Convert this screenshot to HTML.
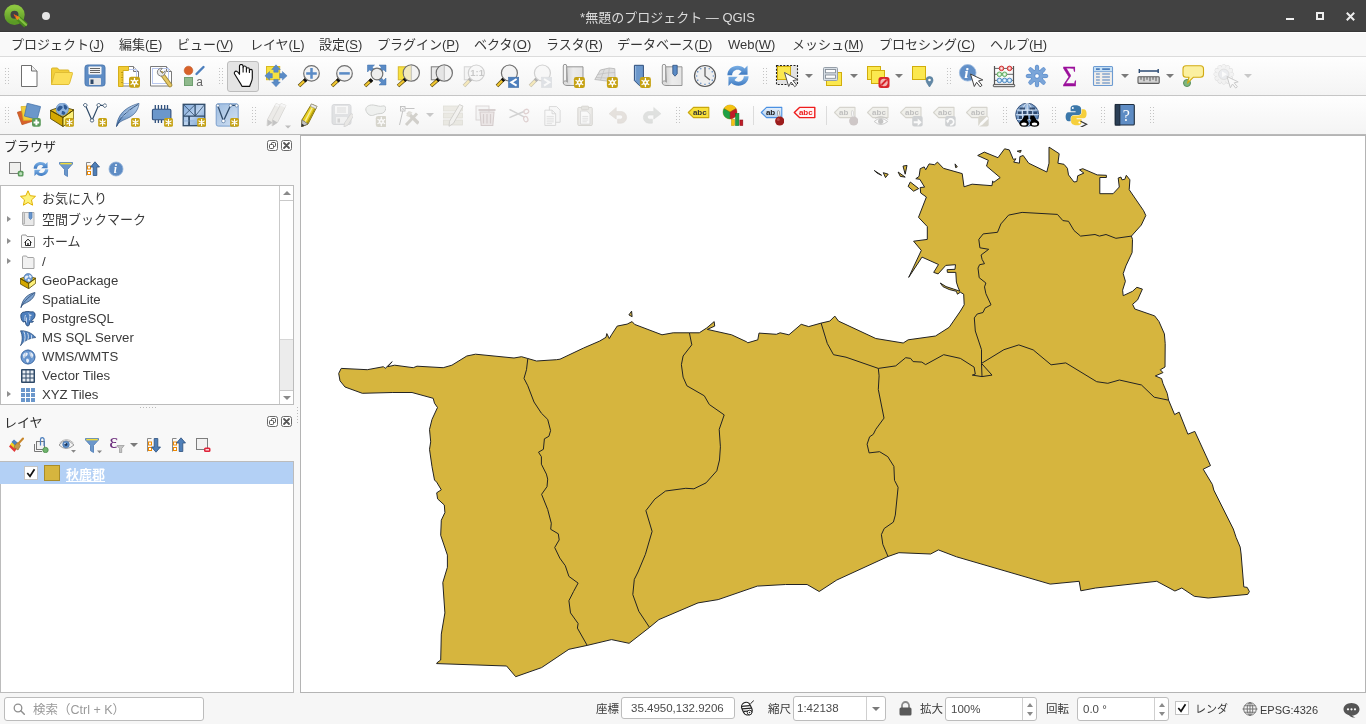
<!DOCTYPE html>
<html lang="ja"><head><meta charset="utf-8"><title>QGIS</title>
<style>
*{box-sizing:border-box;margin:0;padding:0}
html,body{width:1366px;height:724px;overflow:hidden}
body{position:relative;background:#f6f6f6;font-family:"Liberation Sans","Noto Sans CJK JP",sans-serif;font-size:13px;color:#2e2e2e}
.abs{position:absolute}
body>div{will-change:transform}
#title{left:0;top:0;width:1366px;height:32px;background:#424242;border-bottom:1px solid #383838;color:#dcdcdc}
#title .t{position:absolute;left:0;width:1366px;top:8.5px;text-align:center;font-size:13px;line-height:18px;padding-right:31px}
#menu{left:0;top:32px;width:1366px;height:24px;background:#f9f9f9;border-top:1px solid #fff}
#menu span{position:absolute;top:2px;font-size:13px;line-height:20px;white-space:nowrap;color:#363636}
#menu u{text-decoration:underline;text-underline-offset:2px;text-decoration-thickness:1px}
#tb1{left:0;top:56px;width:1366px;height:40px;background:linear-gradient(#fefefe,#f4f4f4);border-top:1px solid #dcdcdc;border-bottom:1px solid #c6c6c6}
#tb2{left:0;top:96px;width:1366px;height:39px;background:linear-gradient(#fefefe,#f4f4f4);border-bottom:1px solid #b9b9b9}
.ic{position:absolute;width:24px;height:24px}
.ic svg{display:block}
.hd{position:absolute;width:5px;height:18px;background-image:radial-gradient(circle,#c4c4c4 0.7px,transparent 0.9px);background-size:3px 3px}
.dd{position:absolute;width:0;height:0;border-left:4px solid transparent;border-right:4px solid transparent;border-top:4px solid #7a7a7a}
.dd.dis{border-top-color:#c8c8c8}
.sep{position:absolute;width:1px;height:22px;background:#dcdcdc}
#left{left:0;top:136px;width:300px;height:556px;background:#f8f8f8}
#canvas{left:300px;top:135px;width:1066px;height:558px;background:#fff;border:1px solid #b4b4b4;overflow:hidden}
.mapsvg{position:absolute;left:0;top:0}
.ptitle{position:absolute;left:4px;font-size:13px;line-height:18px;color:#2e2e2e}
.tree{position:absolute;left:0;width:294px;background:#fff;border:1px solid #bcbcbc}
.row{position:absolute;left:42px;font-size:13.2px;line-height:18px;white-space:nowrap;color:#3a3a3a}
.exp{position:absolute;left:7px;width:0;height:0;border-top:3.5px solid transparent;border-bottom:3.5px solid transparent;border-left:4.5px solid #909090;margin-top:.5px}
.pbtn{position:absolute;width:11px;height:11px}
#status{left:0;top:693px;width:1366px;height:31px;background:#f6f6f6}
#status .lb{position:absolute;top:7px;font-size:11.5px;line-height:18px;white-space:nowrap;color:#3a3a3a}
.fld{position:absolute;top:5px;height:22px;background:#fff;border:1px solid #bdbdbd;border-radius:3px;font-size:11.5px;line-height:20px;color:#4a4a4a;white-space:nowrap;padding-left:5px}
.si{position:absolute}
</style></head><body>
<div id="title" class="abs">
 <div class="abs" style="left:4px;top:4px"><svg width="24" height="24" viewBox="0 0 24 24"><defs><linearGradient id="qg" x1="0" y1="0" x2="0" y2="1"><stop offset="0" stop-color="#8cc63f"/><stop offset="1" stop-color="#5b9a25"/></linearGradient></defs><circle cx="10.500" cy="10.700" r="7.100" fill="none" stroke="url(#qg)" stroke-width="6.200"/><path d="M14 14.200L22 21.500" stroke="#4a8a1c" stroke-width="5.200"/><path d="M14.500 14L22.800 21.500" stroke="#86c243" stroke-width="2"/><path d="M9.600 10.300l6.400 3-2.800 3z" fill="#f08a1c"/><path d="M9.600 10.300l3.300 1.500-1.500 1.600z" fill="#e8541c"/></svg></div>
 <div class="abs" style="left:42px;top:12px;width:8px;height:8px;border-radius:4px;background:#e6e6e6"></div>
 <div class="t">*無題のプロジェクト — QGIS</div>
 <div class="abs" style="left:1286px;top:18px;width:8px;height:2px;background:#f0f0f0"></div>
 <div class="abs" style="left:1316px;top:12px;width:8px;height:8px;border:2px solid #ededed"></div>
 <svg class="abs" style="left:1345.500px;top:11.500px" width="9" height="9" viewBox="0 0 9 9"><path d="M.8 .8L8.200 8.200M8.200 .8L.8 8.200" stroke="#ededed" stroke-width="2"/></svg>
</div>
<div id="menu" class="abs">
 <span style="left:11px">プロジェクト(<u>J</u>)</span>
 <span style="left:119px">編集(<u>E</u>)</span>
 <span style="left:177px">ビュー(<u>V</u>)</span>
 <span style="left:250px">レイヤ(<u>L</u>)</span>
 <span style="left:319px">設定(<u>S</u>)</span>
 <span style="left:377px">プラグイン(<u>P</u>)</span>
 <span style="left:474px">ベクタ(<u>O</u>)</span>
 <span style="left:546px">ラスタ(<u>R</u>)</span>
 <span style="left:617px">データベース(<u>D</u>)</span>
 <span style="left:728px">Web(<u>W</u>)</span>
 <span style="left:792px">メッシュ(<u>M</u>)</span>
 <span style="left:879px">プロセシング(<u>C</u>)</span>
 <span style="left:990px">ヘルプ(<u>H</u>)</span>
</div>
<div id="tb1" class="abs">
<div class="hd" style="left:4px;top:10px"></div>
<div class="ic" style="left:17px;top:7px"><svg width="24" height="24" viewBox="0 0 24 24"><path d="M4.5 1.5h10l5.5 5.5v15.500h-15.500z" fill="#fff" stroke="#6f6f6f" stroke-width="1"/><path d="M14.500 1.500v5.500h5.500" fill="#f0f0f0" stroke="#6f6f6f" stroke-width="1"/></svg></div>
<div class="ic" style="left:50px;top:7px"><svg width="24" height="24" viewBox="0 0 24 24"><path d="M1.500 20.500v-15.500q0-1 1-1h5l1.500 2h9q1 0 1 1v2.500" fill="#f3cf3a" stroke="#d9b52a" stroke-width="1"/><path d="M1.500 20.500l3-11q.3-1 1.300-1h16q1 0 .7 1l-3 10q-.3 1-1.300 1z" fill="#fbde58" stroke="#e0bd35" stroke-width="1"/></svg></div>
<div class="ic" style="left:83px;top:7px"><svg width="24" height="24" viewBox="0 0 24 24"><rect x="2" y="1" width="20" height="21" rx="2.500" fill="#5e8cc4" stroke="#4c79b0"/><rect x="5.500" y="2.500" width="13" height="8" rx=".8" fill="#f4f4f4"/><path d="M7 4.500h10M7 6.500h10M7 8.500h10" stroke="#555" stroke-width=".9"/><rect x="6" y="14" width="12" height="7" rx=".8" fill="#e4e4e4"/><rect x="7.500" y="15.500" width="3" height="4.500" fill="#2f4868"/></svg></div>
<div class="ic" style="left:116px;top:7px"><svg width="24" height="24" viewBox="0 0 24 24"><path d="M3.500 2.500h14l5 5v14.500h-19z" fill="#fff" stroke="#7a7a7a"/><path d="M17.500 2.500v5h5" fill="#eee" stroke="#7a7a7a"/><rect x="6.500" y="5.500" width="14" height="14" fill="none" stroke="#b9c8ef" stroke-width="1"/><path d="M2.500 2.500h10v4h-5.500v16h-4.500z" fill="#f1cb35" stroke="#d4ae1c" stroke-width="1"/><path d="M5 8.500h2M5.500 11h1.500M5 13.500h2M5.500 16h1.500M5 18.500h2" stroke="#b08d10" stroke-width=".8"/><g opacity="1"><rect x="13" y="12.8" width="11" height="11" rx="2.2" fill="#c6a213"/><g stroke="#fff" stroke-width="1.3" stroke-linecap="round"><path d="M18.5 14.3v8.0M15.1 16.3l6.8 4.0M21.9 16.3l-6.8 4.0"/></g><circle cx="18.5" cy="18.3" r="2.5" fill="#fff"/><circle cx="18.5" cy="18.3" r="1.0" fill="#c6a213"/></g></svg></div>
<div class="ic" style="left:149px;top:7px"><svg width="24" height="24" viewBox="0 0 24 24"><path d="M1.500 2.500h16l5 5v14.500h-21z" fill="#fff" stroke="#7a7a7a"/><path d="M17.500 2.500v5h5" fill="#eee" stroke="#7a7a7a"/><rect x="3.500" y="4.500" width="16" height="15" fill="none" stroke="#b9c8ef" stroke-width="1"/><path d="M12.500 9.500L21 21" stroke="#a08835" stroke-width="4.600" stroke-linecap="round"/><path d="M12.500 9.500L21 21" stroke="#e5c765" stroke-width="2.800" stroke-linecap="round"/><path d="M8.300 8.200a4 4 0 0 1 5-3.800l-2.300 2.600 2.600 2.400 2.400-2.600a4 4 0 0 1-4.700 5.200 4 4 0 0 1-3-3.800z" fill="#eaeaea" stroke="#777" stroke-width=".9"/></svg></div>
<div class="ic" style="left:182px;top:7px"><svg width="24" height="24" viewBox="0 0 24 24"><g transform="translate(0,1)"><circle cx="6.500" cy="5.500" r="4.300" fill="#d8622a" stroke="#c25a26" stroke-width=".6"/><path d="M14.500 9L21.500 2" stroke="#4d7fbd" stroke-width="2.400" stroke-linecap="round"/><rect x="2.500" y="12.500" width="8" height="8" fill="#8fb98c" stroke="#6f9f70" stroke-width="1"/><text x="14.200" y="21" font-family="Liberation Sans,sans-serif" font-size="12" fill="#666">a</text></g></svg></div>
<div class="hd" style="left:218px;top:10px"></div>
<div style="position:absolute;left:227px;top:4px;width:32px;height:31px;background:#e4e4e4;border:1px solid #bdbdbd;border-radius:3px"></div>
<div class="ic" style="left:231px;top:7px"><svg width="24" height="24" viewBox="0 0 24 24"><path d="M11 22.400C10 20 8 17.500 6.200 14.300L3.600 10C2.800 8.500 4 7 5.500 7.200 6.800 7.500 7.600 8.800 8.500 10.300V2.300C8.500-.2 12-.2 12.100 2.500V3.600C12.300 1.300 15.300 1.500 15.400 3.800V5C15.600 3.200 18.300 3.400 18.400 5.200V6.600C18.700 4.800 21.300 5 21.300 6.900V14C21.300 17 19.500 19 18.700 22.400Z" fill="#fff" stroke="#111" stroke-width="1.150" stroke-linejoin="round"/><path d="M12.100 3.600V8.500M15.400 5V8.500M18.400 6.600V9" stroke="#111" stroke-width="1.100"/></svg></div>
<div class="ic" style="left:264px;top:7px"><svg width="24" height="24" viewBox="0 0 24 24"><rect x="2.500" y="2.500" width="13.200" height="13.200" fill="#f7e23f" stroke="#d9b820"/><g fill="#5a8bc6" stroke="#4a7ab5" stroke-width=".5" stroke-linejoin="round"><path d="M12 .8l4.300 4.700h-2.100v2.700h-4.400v-2.700h-2.100z"/><path d="M12 22.800l4.300-4.700h-2.100v-2.700h-4.400v2.700h-2.100z"/><path d="M.9 11.800l4.700-4.300v2.100h2.700v4.400h-2.700v2.100z"/><path d="M23.100 11.800l-4.700-4.300v2.100h-2.700v4.400h2.700v2.100z"/></g></svg></div>
<div class="ic" style="left:297px;top:7px"><svg width="24" height="24" viewBox="0 0 24 24"><g opacity="1"><path d="M9.2 15.2L2 22" stroke="#5a4a10" stroke-width="3.600" stroke-linecap="butt"/><path d="M7.999999999999999 16.4L2.300 21.700" stroke="#f2c832" stroke-width="2.200" stroke-linecap="butt"/><path d="M9.5 14.899999999999999l-2.300 2.300" stroke="#111" stroke-width="3.600"/><circle cx="14.5" cy="9.4" r="7.8" fill="#f3f3f3" stroke="#707070" stroke-width="1.200"/></g><path d="M9.200 9.400h10.600M14.500 4.100v10.600" stroke="#5a8bc6" stroke-width="2.500"/></svg></div>
<div class="ic" style="left:330px;top:7px"><svg width="24" height="24" viewBox="0 0 24 24"><g opacity="1"><path d="M9.2 15.2L2 22" stroke="#5a4a10" stroke-width="3.600" stroke-linecap="butt"/><path d="M7.999999999999999 16.4L2.300 21.700" stroke="#f2c832" stroke-width="2.200" stroke-linecap="butt"/><path d="M9.5 14.899999999999999l-2.300 2.300" stroke="#111" stroke-width="3.600"/><circle cx="14.5" cy="9.4" r="7.8" fill="#f3f3f3" stroke="#707070" stroke-width="1.200"/></g><path d="M9.200 9.400h10.600" stroke="#5a8bc6" stroke-width="2.500"/></svg></div>
<div class="ic" style="left:363px;top:7px"><svg width="24" height="24" viewBox="0 0 24 24"><g fill="#5a8bc6" stroke="#4071ab" stroke-width=".5"><path d="M4.500 1h7l-2.300 2.300 3 3-2.400 2.400-3-3-2.300 2.300z"/><path d="M23 1v7l-2.300-2.300-3 3-2.400-2.400 3-3-2.300-2.300z"/><path d="M23 21h-7l2.300-2.300-3-3 2.400-2.400 3 3 2.300-2.300z"/></g><g opacity="1"><path d="M8.7 15.8L2 22" stroke="#5a4a10" stroke-width="3.600" stroke-linecap="butt"/><path d="M7.499999999999999 17.0L2.300 21.700" stroke="#f2c832" stroke-width="2.200" stroke-linecap="butt"/><path d="M9.0 15.5l-2.300 2.300" stroke="#111" stroke-width="3.600"/><circle cx="14" cy="10" r="5.8" fill="#ededed" stroke="#707070" stroke-width="1.200"/></g></svg></div>
<div class="ic" style="left:396px;top:7px"><svg width="24" height="24" viewBox="0 0 24 24"><rect x="2.300" y="2.800" width="11" height="13" fill="#f7e23f" stroke="#d8b82a"/><g opacity="1"><path d="M10.0 14.8L2 22" stroke="#5a4a10" stroke-width="3.600" stroke-linecap="butt"/><path d="M8.8 16.0L2.300 21.700" stroke="#f2c832" stroke-width="2.200" stroke-linecap="butt"/><path d="M10.3 14.5l-2.300 2.300" stroke="#111" stroke-width="3.600"/><circle cx="15.3" cy="9" r="8.1" fill="#f3f3f3" stroke="#707070" stroke-width="1.200"/></g><path d="M15.300 1.500a7.500 7.500 0 0 0 0 15z" fill="#f0e6b4" opacity=".85"/><path d="M15.300 1.300v15.400" stroke="#aaa" stroke-width=".7"/></svg></div>
<div class="ic" style="left:429px;top:7px"><svg width="24" height="24" viewBox="0 0 24 24"><rect x="2.300" y="2.800" width="11" height="13" fill="#e9e9e9" stroke="#7d7d7d"/><g opacity="1"><path d="M10.0 14.8L2 22" stroke="#5a4a10" stroke-width="3.600" stroke-linecap="butt"/><path d="M8.8 16.0L2.300 21.700" stroke="#f2c832" stroke-width="2.200" stroke-linecap="butt"/><path d="M10.3 14.5l-2.300 2.300" stroke="#111" stroke-width="3.600"/><circle cx="15.3" cy="9" r="8.1" fill="#f3f3f3" stroke="#707070" stroke-width="1.200"/></g><path d="M15.300 1.500a7.500 7.500 0 0 0 0 15z" fill="#e2e2e2" opacity=".85"/><path d="M15.300 1.300v15.400" stroke="#aaa" stroke-width=".7"/></svg></div>
<div class="ic" style="left:462px;top:7px"><svg width="24" height="24" viewBox="0 0 24 24"><g opacity=".3"><rect x="2.300" y="2.800" width="11" height="13" fill="#e9e9e9" stroke="#7d7d7d"/><g opacity="1"><path d="M9.0 14.8L2 22" stroke="#5a4a10" stroke-width="3.600" stroke-linecap="butt"/><path d="M7.8 16.0L2.300 21.700" stroke="#f2c832" stroke-width="2.200" stroke-linecap="butt"/><path d="M9.3 14.5l-2.300 2.300" stroke="#111" stroke-width="3.600"/><circle cx="14.3" cy="9" r="8" fill="#f3f3f3" stroke="#707070" stroke-width="1.200"/></g><text x="8.300" y="12.300" font-family="Liberation Sans,sans-serif" font-weight="bold" font-size="9.500" fill="#555">1:1</text></g></svg></div>
<div class="ic" style="left:495px;top:7px"><svg width="24" height="24" viewBox="0 0 24 24"><g opacity="1"><path d="M9.100000000000001 14.8L2 22" stroke="#5a4a10" stroke-width="3.600" stroke-linecap="butt"/><path d="M7.900000000000001 16.0L2.300 21.700" stroke="#f2c832" stroke-width="2.200" stroke-linecap="butt"/><path d="M9.400000000000002 14.5l-2.300 2.300" stroke="#111" stroke-width="3.600"/><circle cx="14.4" cy="9" r="8" fill="#f3f3f3" stroke="#707070" stroke-width="1.200"/></g><rect x="13.600" y="13.200" width="10.200" height="10.200" fill="#4d7fbd" stroke="#3c6aa3" stroke-width=".6"/><path d="M21.600 15l-5.300 3.300 5.300 3.300" fill="none" stroke="#fff" stroke-width="2"/></svg></div>
<div class="ic" style="left:528px;top:7px"><svg width="24" height="24" viewBox="0 0 24 24"><g opacity=".3"><g opacity="1"><path d="M9.100000000000001 14.8L2 22" stroke="#5a4a10" stroke-width="3.600" stroke-linecap="butt"/><path d="M7.900000000000001 16.0L2.300 21.700" stroke="#f2c832" stroke-width="2.200" stroke-linecap="butt"/><path d="M9.400000000000002 14.5l-2.300 2.300" stroke="#111" stroke-width="3.600"/><circle cx="14.4" cy="9" r="8" fill="#f3f3f3" stroke="#707070" stroke-width="1.200"/></g><rect x="13.600" y="13.200" width="10.200" height="10.200" fill="#a9b2bd" stroke="#98a0aa" stroke-width=".6"/><path d="M16 15l5.300 3.300-5.300 3.300" fill="none" stroke="#fff" stroke-width="2"/></g></svg></div>
<div class="ic" style="left:561px;top:7px"><svg width="24" height="24" viewBox="0 0 24 24"><defs><linearGradient id="sg" x1="0" y1="0" x2="1" y2="0"><stop offset="0" stop-color="#d4d4d4"/><stop offset=".4" stop-color="#ececec"/><stop offset="1" stop-color="#e4e4e4"/></linearGradient></defs><path d="M5.500 2.800h16.500v18.700h-15.500z" fill="url(#sg)" stroke="#8c8c8c" stroke-width=".9"/><path d="M2.300 18.800v-16.800a1.600 1.600 0 0 1 3.400 0v17" fill="#f2f2f2" stroke="#8c8c8c" stroke-width=".9"/><path d="M5.700 17.500a2 2 0 0 0-3.400 1.300c0 1.700 1.700 2.700 3.700 2.700h3" fill="#dcdcdc" stroke="#8c8c8c" stroke-width=".9"/><g opacity="1"><rect x="12.9" y="13" width="11" height="11" rx="2.2" fill="#c6a213"/><g stroke="#fff" stroke-width="1.3" stroke-linecap="round"><path d="M18.4 14.5v8.0M14.999999999999998 16.5l6.8 4.0M21.799999999999997 16.5l-6.8 4.0"/></g><circle cx="18.4" cy="18.5" r="2.5" fill="#fff"/><circle cx="18.4" cy="18.5" r="1.0" fill="#c6a213"/></g></svg></div>
<div class="ic" style="left:593.5px;top:7px"><svg width="24" height="24" viewBox="0 0 24 24"><path d="M.8 15.500l5.500-9.500 9-2 5.500.7.500 13.500-7-1z" fill="#dedede" stroke="#b5b5b5" stroke-width=".8" stroke-linejoin="round"/><path d="M3.500 10.500l9-1.500 8.500-.5M10.500 5l-4 11M15.300 4l-1.500 13M2 13.500l10 .5 9.300-.5" stroke="#bdbdbd" stroke-width=".7" fill="none"/><g opacity="1"><rect x="12.9" y="13" width="11" height="11" rx="2.2" fill="#c6a213"/><g stroke="#fff" stroke-width="1.3" stroke-linecap="round"><path d="M18.4 14.5v8.0M14.999999999999998 16.5l6.8 4.0M21.799999999999997 16.5l-6.8 4.0"/></g><circle cx="18.4" cy="18.5" r="2.5" fill="#fff"/><circle cx="18.4" cy="18.5" r="1.0" fill="#c6a213"/></g></svg></div>
<div class="ic" style="left:628px;top:7px"><svg width="24" height="24" viewBox="0 0 24 24"><path d="M6.400 1.300h9v20.300h-4l-5-5z" fill="#6b97cb" stroke="#2f4f7c" stroke-width="1" stroke-linejoin="round"/><path d="M7.600 2v14" stroke="#9dbce0" stroke-width=".9"/><g opacity="1"><rect x="11.9" y="13" width="11" height="11" rx="2.2" fill="#c6a213"/><g stroke="#fff" stroke-width="1.3" stroke-linecap="round"><path d="M17.4 14.5v8.0M13.999999999999998 16.5l6.8 4.0M20.799999999999997 16.5l-6.8 4.0"/></g><circle cx="17.4" cy="18.5" r="2.5" fill="#fff"/><circle cx="17.4" cy="18.5" r="1.0" fill="#c6a213"/></g></svg></div>
<div class="ic" style="left:660px;top:7px"><svg width="24" height="24" viewBox="0 0 24 24"><defs><linearGradient id="sg" x1="0" y1="0" x2="1" y2="0"><stop offset="0" stop-color="#d4d4d4"/><stop offset=".4" stop-color="#ececec"/><stop offset="1" stop-color="#e4e4e4"/></linearGradient></defs><path d="M5.500 2.800h16.500v18.700h-15.500z" fill="url(#sg)" stroke="#8c8c8c" stroke-width=".9"/><path d="M2.300 18.800v-16.800a1.600 1.600 0 0 1 3.400 0v17" fill="#f2f2f2" stroke="#8c8c8c" stroke-width=".9"/><path d="M5.700 17.500a2 2 0 0 0-3.400 1.300c0 1.700 1.700 2.700 3.700 2.700h3" fill="#dcdcdc" stroke="#8c8c8c" stroke-width=".9"/><path d="M12.800 1.300h4.400v8.500l-2.200 2.400-2.200-2.400z" fill="#5a8bc6" stroke="#2f4f7c" stroke-width=".8"/></svg></div>
<div class="ic" style="left:693px;top:7px"><svg width="24" height="24" viewBox="0 0 24 24"><circle cx="12" cy="12" r="10.500" fill="#efefef" stroke="#5a5a5a" stroke-width="1.200"/><g stroke="#4d7fbd" stroke-width="1.200"><path d="M12 3v1.300M12 19.700V21M3 12h1.300M19.700 12H21M7.500 4.200l.6 1.100M16.500 4.200l-.6 1.100M4.200 7.500l1.100.6M19.800 7.500l-1.100.6M4.200 16.500l1.100-.6M19.800 16.500l-1.100-.6M7.500 19.800l.6-1.100M16.500 19.800l-.6-1.100"/></g><path d="M12 3.500v8.500l5 4" fill="none" stroke="#666" stroke-width="1.300"/></svg></div>
<div class="ic" style="left:726px;top:7px"><svg width="24" height="24" viewBox="0 0 24 24"><defs><linearGradient id="rg" x1="0" y1="0" x2="0" y2="1"><stop offset="0" stop-color="#7eb2e6"/><stop offset="1" stop-color="#3c78c0"/></linearGradient></defs><g transform="translate(12 11.700) scale(1.060) translate(-12 -12)"><path d="M2 11.500c0-5.500 4.500-9 9.500-9 3 0 5 1 6.700 2.600l2.800-2.800v8.700h-8.700l3-3c-1-1-2.200-1.600-3.800-1.600-2.800 0-5 2.300-5 5.100z" fill="url(#rg)"/><path d="M22 12.500c0 5.500-4.500 9-9.500 9-3 0-5-1-6.700-2.600l-2.800 2.800v-8.700h8.700l-3 3c1 1 2.200 1.600 3.800 1.600 2.800 0 5-2.300 5-5.100z" fill="url(#rg)"/></g></svg></div>
<div class="hd" style="left:762px;top:10px"></div>
<div class="ic" style="left:774.5px;top:7px"><svg width="26" height="26" viewBox="0 0 26 26"><rect x="1.500" y="1.500" width="21" height="19" fill="#e2e2e2" stroke="#222" stroke-width="1.100" stroke-dasharray="2 1.400"/><rect x="2.500" y="2.500" width="13" height="13" fill="#fbe84f" stroke="#d1ad0c"/><path d="M9.500 8.500l4.200 14 2.400-4.500 3.600 4.700 2-1.600-3.700-4.500 4.600-1z" fill="#fff" stroke="#555" stroke-width="1" stroke-linejoin="round"/></svg></div>
<div class="dd" style="left:805px;top:17px"></div>
<div class="ic" style="left:820px;top:7px"><svg width="24" height="24" viewBox="0 0 24 24"><rect x="6.500" y="8.500" width="15" height="13" fill="#fbe84f" stroke="#d1ad0c"/><rect x="3.500" y="3.500" width="14" height="13" rx="1" fill="#d8dfe6" stroke="#959ea8"/><rect x="5.500" y="5.500" width="10" height="3.300" fill="#fff" stroke="#858e98" stroke-width=".9"/><rect x="5.500" y="11" width="10" height="3.300" fill="#fff" stroke="#858e98" stroke-width=".9"/></svg></div>
<div class="dd" style="left:850px;top:17px"></div>
<div class="ic" style="left:866px;top:7px"><svg width="24" height="25" viewBox="0 0 24 25"><rect x="1.500" y="2.500" width="13" height="13" fill="#fbe84f" stroke="#d1ad0c"/><rect x="5.500" y="6.500" width="13" height="13" fill="#fbe84f" stroke="#d1ad0c"/><rect x="12.500" y="13" width="11" height="11" rx="2.500" fill="#d8242b"/><circle cx="18" cy="18.500" r="3.700" fill="#f3b7b5"/><path d="M15.500 21l5-5" stroke="#d8242b" stroke-width="1.800"/></svg></div>
<div class="dd" style="left:895px;top:17px"></div>
<div class="ic" style="left:910px;top:7px"><svg width="24" height="24" viewBox="0 0 24 24"><rect x="2.500" y="2.500" width="13" height="13" fill="#fbe84f" stroke="#d1ad0c"/><path d="M19.500 23c-2.300-3.500-3.500-5-3.500-7a3.500 3.500 0 0 1 7 0c0 2-1.200 3.500-3.500 7z" fill="#6288a6" stroke="#4f7795" stroke-width=".6"/><circle cx="19.500" cy="16" r="1.300" fill="#fff"/></svg></div>
<div class="hd" style="left:946px;top:10px"></div>
<div class="ic" style="left:957px;top:6px"><svg width="26" height="26" viewBox="0 0 26 26"><circle cx="10.700" cy="9.800" r="8.300" fill="#6290c8" stroke="#9dbbe0" stroke-width=".8"/><text x="7.200" y="15.300" font-family="Liberation Serif,serif" font-style="italic" font-weight="bold" font-size="15.500" fill="#fff">i</text><path d="M13.500 11l3.800 12.500 2.300-4.200 3.500 4.500 1.900-1.500-3.500-4.400 4.300-1z" fill="#fff" stroke="#444" stroke-width="1" stroke-linejoin="round"/></svg></div>
<div class="ic" style="left:992px;top:7px"><svg width="24" height="24" viewBox="0 0 24 24"><path d="M2.500 2v18.500M21.500 2v18.500" stroke="#555" stroke-width="1.200"/><path d="M2.500 4.400h19M2.500 10.300h19M2.500 16.400h19" stroke="#555" stroke-width=".9"/><rect x="1.300" y="20.400" width="21.400" height="2.300" rx=".6" fill="#e2e2e2" stroke="#555" stroke-width="1"/><circle cx="9.5" cy="4.4" r="2.300" fill="#f29a9a" stroke="#cc2a2a" stroke-width=".9"/><rect x="8.7" y="3.6000000000000005" width="1.600" height="1.600" fill="#fff" opacity=".85" transform="rotate(45 9.5 4.4)"/><circle cx="17.5" cy="4.4" r="2.300" fill="#f29a9a" stroke="#cc2a2a" stroke-width=".9"/><rect x="16.7" y="3.6000000000000005" width="1.600" height="1.600" fill="#fff" opacity=".85" transform="rotate(45 17.5 4.4)"/><circle cx="7.4" cy="10.3" r="2.300" fill="#bfe8bf" stroke="#5aa85a" stroke-width=".9"/><rect x="6.6000000000000005" y="9.5" width="1.600" height="1.600" fill="#fff" opacity=".85" transform="rotate(45 7.4 10.3)"/><circle cx="12.6" cy="10.3" r="2.300" fill="#bfe8bf" stroke="#5aa85a" stroke-width=".9"/><rect x="11.799999999999999" y="9.5" width="1.600" height="1.600" fill="#fff" opacity=".85" transform="rotate(45 12.6 10.3)"/><circle cx="7.4" cy="16.4" r="2.300" fill="#b3d6f2" stroke="#4a86c0" stroke-width=".9"/><rect x="6.6000000000000005" y="15.599999999999998" width="1.600" height="1.600" fill="#fff" opacity=".85" transform="rotate(45 7.4 16.4)"/><circle cx="12.6" cy="16.4" r="2.300" fill="#b3d6f2" stroke="#4a86c0" stroke-width=".9"/><rect x="11.799999999999999" y="15.599999999999998" width="1.600" height="1.600" fill="#fff" opacity=".85" transform="rotate(45 12.6 16.4)"/><circle cx="17.5" cy="16.4" r="2.300" fill="#b3d6f2" stroke="#4a86c0" stroke-width=".9"/><rect x="16.7" y="15.599999999999998" width="1.600" height="1.600" fill="#fff" opacity=".85" transform="rotate(45 17.5 16.4)"/></svg></div>
<div class="ic" style="left:1025px;top:7px"><svg width="24" height="24" viewBox="0 0 24 24"><g fill="#7ba5d8" stroke="#4a80c8" stroke-width="1"><rect x="10.4" y="1.1999999999999993" width="3.2" height="6.800000000000001" rx="1.6" transform="rotate(0.0 12 12)"/><rect x="10.4" y="1.1999999999999993" width="3.2" height="6.800000000000001" rx="1.6" transform="rotate(45.0 12 12)"/><rect x="10.4" y="1.1999999999999993" width="3.2" height="6.800000000000001" rx="1.6" transform="rotate(90.0 12 12)"/><rect x="10.4" y="1.1999999999999993" width="3.2" height="6.800000000000001" rx="1.6" transform="rotate(135.0 12 12)"/><rect x="10.4" y="1.1999999999999993" width="3.2" height="6.800000000000001" rx="1.6" transform="rotate(180.0 12 12)"/><rect x="10.4" y="1.1999999999999993" width="3.2" height="6.800000000000001" rx="1.6" transform="rotate(225.0 12 12)"/><rect x="10.4" y="1.1999999999999993" width="3.2" height="6.800000000000001" rx="1.6" transform="rotate(270.0 12 12)"/><rect x="10.4" y="1.1999999999999993" width="3.2" height="6.800000000000001" rx="1.6" transform="rotate(315.0 12 12)"/><circle cx="12" cy="12" r="6"/></g><g fill="#7ba5d8"><rect x="10.4" y="1.1999999999999993" width="3.2" height="6.800000000000001" rx="1.6" transform="rotate(0.0 12 12)"/><rect x="10.4" y="1.1999999999999993" width="3.2" height="6.800000000000001" rx="1.6" transform="rotate(45.0 12 12)"/><rect x="10.4" y="1.1999999999999993" width="3.2" height="6.800000000000001" rx="1.6" transform="rotate(90.0 12 12)"/><rect x="10.4" y="1.1999999999999993" width="3.2" height="6.800000000000001" rx="1.6" transform="rotate(135.0 12 12)"/><rect x="10.4" y="1.1999999999999993" width="3.2" height="6.800000000000001" rx="1.6" transform="rotate(180.0 12 12)"/><rect x="10.4" y="1.1999999999999993" width="3.2" height="6.800000000000001" rx="1.6" transform="rotate(225.0 12 12)"/><rect x="10.4" y="1.1999999999999993" width="3.2" height="6.800000000000001" rx="1.6" transform="rotate(270.0 12 12)"/><rect x="10.4" y="1.1999999999999993" width="3.2" height="6.800000000000001" rx="1.6" transform="rotate(315.0 12 12)"/><circle cx="12" cy="12" r="6"/></g><circle cx="12" cy="12" r="2.3" fill="#fff" stroke="#4a80c8" stroke-width=".8"/></svg></div>
<div class="ic" style="left:1058px;top:7px"><svg width="24" height="24" viewBox="0 0 24 24"><text x="4.300" y="21.500" font-family="Liberation Serif,serif" font-size="29" textLength="15" lengthAdjust="spacingAndGlyphs" fill="#9b0f9b" stroke="#9b0f9b" stroke-width=".3">Σ</text></svg></div>
<div class="ic" style="left:1091px;top:7px"><svg width="24" height="24" viewBox="0 0 24 24"><rect x="2.500" y="2.500" width="19" height="19" rx="1" fill="#f1eeea" stroke="#6c9bd2" stroke-width="1.100"/><rect x="3" y="3" width="18" height="4.500" fill="#c5e0f5"/><path d="M3 7.600h18" stroke="#6c9bd2" stroke-width=".8"/><path d="M5 5.200h3.800M11.200 5.200h7.700" stroke="#4d7fbd" stroke-width="1.700"/><path d="M5 10h3.800M11.200 10h7.700M5 13h3.800M11.200 13h7.700M5 16h3.800M11.200 16h7.700M5 19h3.800M11.200 19h7.700" stroke="#4d7fbd" stroke-width="1.100"/></svg></div>
<div class="dd" style="left:1121px;top:17px"></div>
<div class="ic" style="left:1135.5px;top:7px"><svg width="25" height="24" viewBox="0 0 25 24"><path d="M3 7h19.500M3.300 5v4M22.200 5v4" stroke="#2b4a73" stroke-width="1.400"/><rect x="2" y="12.700" width="21.200" height="6.700" rx=".8" fill="#d2d2d2" stroke="#5a5a5a" stroke-width="1.100"/><path d="M5 13v2.800M8 13v4.200M11 13v2.800M14 13v4.200M17 13v2.800M20 13v4.200" stroke="#5a5a5a" stroke-width="1"/></svg></div>
<div class="dd" style="left:1166px;top:17px"></div>
<div class="ic" style="left:1181px;top:7px"><svg width="25" height="25" viewBox="0 0 25 25"><circle cx="6" cy="19" r="3.500" fill="#7fb77f" stroke="#5a8f5c" stroke-width="1"/><path d="M5 1.700h14.500q3 0 3 3v5.500q0 3-3 3h-7l-6 6 1.500-6h-3q-3 0-3-3v-5.500q0-3 3-3z" fill="#fbf0a0" stroke="#d1aa12" stroke-width="1.100" stroke-linejoin="round"/></svg></div>
<div class="ic" style="left:1213px;top:6px"><svg width="26" height="26" viewBox="0 0 26 26"><g opacity=".3"><g fill="#e4e4e4" stroke="#999" stroke-width="1"><rect x="9.0" y="1.5" width="3.6" height="5.300000000000001" rx="1.8" transform="rotate(0.0 10.8 11.3)"/><rect x="9.0" y="1.5" width="3.6" height="5.300000000000001" rx="1.8" transform="rotate(30.0 10.8 11.3)"/><rect x="9.0" y="1.5" width="3.6" height="5.300000000000001" rx="1.8" transform="rotate(60.0 10.8 11.3)"/><rect x="9.0" y="1.5" width="3.6" height="5.300000000000001" rx="1.8" transform="rotate(90.0 10.8 11.3)"/><rect x="9.0" y="1.5" width="3.6" height="5.300000000000001" rx="1.8" transform="rotate(120.0 10.8 11.3)"/><rect x="9.0" y="1.5" width="3.6" height="5.300000000000001" rx="1.8" transform="rotate(150.0 10.8 11.3)"/><rect x="9.0" y="1.5" width="3.6" height="5.300000000000001" rx="1.8" transform="rotate(180.0 10.8 11.3)"/><rect x="9.0" y="1.5" width="3.6" height="5.300000000000001" rx="1.8" transform="rotate(210.0 10.8 11.3)"/><rect x="9.0" y="1.5" width="3.6" height="5.300000000000001" rx="1.8" transform="rotate(240.0 10.8 11.3)"/><rect x="9.0" y="1.5" width="3.6" height="5.300000000000001" rx="1.8" transform="rotate(270.0 10.8 11.3)"/><rect x="9.0" y="1.5" width="3.6" height="5.300000000000001" rx="1.8" transform="rotate(300.0 10.8 11.3)"/><rect x="9.0" y="1.5" width="3.6" height="5.300000000000001" rx="1.8" transform="rotate(330.0 10.8 11.3)"/><circle cx="10.8" cy="11.3" r="6.5"/></g><g fill="#e4e4e4"><rect x="9.0" y="1.5" width="3.6" height="5.300000000000001" rx="1.8" transform="rotate(0.0 10.8 11.3)"/><rect x="9.0" y="1.5" width="3.6" height="5.300000000000001" rx="1.8" transform="rotate(30.0 10.8 11.3)"/><rect x="9.0" y="1.5" width="3.6" height="5.300000000000001" rx="1.8" transform="rotate(60.0 10.8 11.3)"/><rect x="9.0" y="1.5" width="3.6" height="5.300000000000001" rx="1.8" transform="rotate(90.0 10.8 11.3)"/><rect x="9.0" y="1.5" width="3.6" height="5.300000000000001" rx="1.8" transform="rotate(120.0 10.8 11.3)"/><rect x="9.0" y="1.5" width="3.6" height="5.300000000000001" rx="1.8" transform="rotate(150.0 10.8 11.3)"/><rect x="9.0" y="1.5" width="3.6" height="5.300000000000001" rx="1.8" transform="rotate(180.0 10.8 11.3)"/><rect x="9.0" y="1.5" width="3.6" height="5.300000000000001" rx="1.8" transform="rotate(210.0 10.8 11.3)"/><rect x="9.0" y="1.5" width="3.6" height="5.300000000000001" rx="1.8" transform="rotate(240.0 10.8 11.3)"/><rect x="9.0" y="1.5" width="3.6" height="5.300000000000001" rx="1.8" transform="rotate(270.0 10.8 11.3)"/><rect x="9.0" y="1.5" width="3.6" height="5.300000000000001" rx="1.8" transform="rotate(300.0 10.8 11.3)"/><rect x="9.0" y="1.5" width="3.6" height="5.300000000000001" rx="1.8" transform="rotate(330.0 10.8 11.3)"/><circle cx="10.8" cy="11.3" r="6.5"/></g><circle cx="10.8" cy="11.3" r="0" fill="#fff" stroke="#999" stroke-width=".8"/><circle cx="10.800" cy="11.300" r="5.200" fill="#c9ced6" stroke="#999" stroke-width=".8"/><path d="M9 8.300l5 3-5 3z" fill="#fff"/><path d="M14 13.500l3.400 11.300 2.100-3.800 3.200 4.100 1.700-1.300-3.200-4 4-.9z" fill="#fff" stroke="#666" stroke-width="1" stroke-linejoin="round"/></g></svg></div>
<div class="dd dis" style="left:1244px;top:17px"></div>
</div>
<div id="tb2" class="abs">
<div class="hd" style="left:4px;top:10px"></div>
<div class="ic" style="left:17px;top:7px"><svg width="24" height="24" viewBox="0 0 24 24"><g stroke-width=".7" stroke-linejoin="round"><path d="M.3 9.300l11-3.300 4.200 12.300-10.500 3.400z" fill="#d8622a" stroke="#b9511f"/><path d="M4 3.600l11.500-.6 1 14-10.100.4z" fill="#f3cf3a" stroke="#d3ae1f"/><path d="M10.200.2l13.400 3.400-3.400 12.800-12.800-3.300z" fill="#6b97cb" stroke="#3f6fa8"/></g><rect x="15" y="15" width="8.800" height="8.800" rx="2" fill="#5b9a5b"/><path d="M19.400 16.600v5.600M16.600 19.400h5.600" stroke="#fff" stroke-width="2"/></svg></div>
<div class="ic" style="left:50px;top:7px"><svg width="24" height="24" viewBox="0 0 24 24"><g stroke="#5a4a00" stroke-width=".9" stroke-linejoin="round"><path d="M.3 7.400l11.200-4 12.300 3.500-10.800 7.600z" fill="#e8c020"/><path d="M.3 7.400l12.700 7.100v9l-12.700-8z" fill="#d4a800"/><path d="M13 14.500l10.800-7.600v8.600l-10.800 8z" fill="#fcf07a"/></g><circle cx="12.300" cy="6.200" r="6.200" fill="#8fb4e0" stroke="#5a86bd" stroke-width=".6"/><path d="M8 4c1.500-2 3.500-1.500 4.500-.5s-1 2.500-2 3.500-2 2-3 .5 0-2.500.5-3.500zM13.500 1.500c2 0 3.500 1.500 4 3l-1.500 2.500-2-1.500zM12 8c1.500 0 3 .5 3.500 2l-1.500 2-2.500-1z" fill="#2f5a94"/><path d="M.3 7.400l12.700 7.100 10.800-7.600" fill="none" stroke="#5a4a00" stroke-width=".9"/><path d="M6.400 9.600a6.200 6.200 0 0 0 11.800-.2l-5.200 5.100z" fill="#8fb4e0" opacity="0"/><g opacity="1"><rect x="15.1" y="15" width="8.8" height="8.8" rx="1.600" fill="#c6a213"/><g stroke="#fff" stroke-width="1.150" stroke-linecap="round"><path d="M19.5 16.4v6M16.9 17.9l5.200 3M22.1 17.9l-5.200 3"/></g></g></svg></div>
<div class="ic" style="left:83px;top:7px"><svg width="24" height="24" viewBox="0 0 24 24"><path d="M2.300 2.100l6.700 15.300 6.700-15.300 6.200.5" fill="none" stroke="#2f4a68" stroke-width="1.200"/><g fill="#fff" stroke="#2f4a68" stroke-width=".8"><rect x=".8" y=".6" width="3" height="3" transform="rotate(45 2.300 2.100)"/><rect x="14.200" y=".6" width="3" height="3" transform="rotate(45 15.700 2.100)"/><rect x="20.400" y="1.100" width="3" height="3" transform="rotate(45 21.900 2.600)"/><circle cx="9" cy="17.400" r="1.700"/></g><g opacity="1"><rect x="15.2" y="15" width="8.8" height="8.8" rx="1.600" fill="#c6a213"/><g stroke="#fff" stroke-width="1.150" stroke-linecap="round"><path d="M19.6 16.4v6M17.0 17.9l5.200 3M22.200000000000003 17.9l-5.200 3"/></g></g></svg></div>
<div class="ic" style="left:116px;top:7px"><svg width="24" height="24" viewBox="0 0 24 24"><defs><linearGradient id="fg" x1="0" y1="1" x2="1" y2="0"><stop offset="0" stop-color="#5a86bd"/><stop offset="1" stop-color="#b7d0ec"/></linearGradient></defs><path d="M.5 23.500c.5-6.500 3.500-12.500 8.500-16.500 4-3.300 9-5.300 14-6.700-.3 4-2 8-5.500 11.200-4.500 4-10 5-13.500 7.500-1.500 1.200-2.500 2.700-3.500 4.500z" fill="url(#fg)" stroke="#3b5f8e" stroke-width=".7"/><path d="M.5 23.500c2.500-7 9-15 21.500-22" fill="none" stroke="#2f4f7a" stroke-width=".9"/><path d="M5 14c2-1 4-1.500 5.500-3M8 10c2-.8 4-1.300 6-3" fill="none" stroke="#e6eef8" stroke-width=".5" opacity=".7"/><g opacity="1"><rect x="15.1" y="15" width="8.8" height="8.8" rx="1.600" fill="#c6a213"/><g stroke="#fff" stroke-width="1.150" stroke-linecap="round"><path d="M19.5 16.4v6M16.9 17.9l5.200 3M22.1 17.9l-5.200 3"/></g></g></svg></div>
<div class="ic" style="left:149px;top:7px"><svg width="24" height="24" viewBox="0 0 24 24"><path d="M6.300 2.100v4M9.400 2.100v4M12.500 2.100v4M15.700 2.100v4M18.500 2.100v4M6.300 17v3M9.400 17v3M12.500 17v3" stroke="#2f4f7c" stroke-width="1.300"/><rect x="3.400" y="6.300" width="18.500" height="10.500" rx="1.300" fill="#6b97cb" stroke="#2f4f7c" stroke-width="1.100"/><g opacity="1"><rect x="15.1" y="15" width="8.8" height="8.8" rx="1.600" fill="#c6a213"/><g stroke="#fff" stroke-width="1.150" stroke-linecap="round"><path d="M19.5 16.4v6M16.9 17.9l5.200 3M22.1 17.9l-5.200 3"/></g></g></svg></div>
<div class="ic" style="left:182px;top:7px"><svg width="24" height="24" viewBox="0 0 24 24"><defs><linearGradient id="mg" x1="0" y1="0" x2="1" y2="1"><stop offset="0" stop-color="#7ba5d8"/><stop offset=".5" stop-color="#bcd3ee"/><stop offset="1" stop-color="#6b97cb"/></linearGradient></defs><rect x="1.200" y="1.300" width="21.600" height="21.400" fill="url(#mg)" stroke="#2f4a68" stroke-width="1.300"/><path d="M13.100 1.300v11.800M1.200 13.100h21.600M7.100 13.100v9.600" stroke="#2f4a68" stroke-width="1.300"/><path d="M1.800 1.900l11 11M12.800 1.900l-11 11M13.500 12.700l9-11" stroke="#2f4a68" stroke-width=".8"/><path d="M1.800 17.900h11" stroke="#9dbce0" stroke-width="1.600"/><path d="M7.100 13.100v9.600" stroke="#2f4a68" stroke-width="1.300"/><g opacity="1"><rect x="15.2" y="15" width="8.8" height="8.8" rx="1.600" fill="#c6a213"/><g stroke="#fff" stroke-width="1.150" stroke-linecap="round"><path d="M19.6 16.4v6M17.0 17.9l5.200 3M22.200000000000003 17.9l-5.200 3"/></g></g></svg></div>
<div class="ic" style="left:215px;top:7px"><svg width="24" height="24" viewBox="0 0 24 24"><defs><linearGradient id="vg" x1="0" y1="0" x2="1" y2="1"><stop offset="0" stop-color="#9dbce0"/><stop offset="1" stop-color="#d3e2f3"/></linearGradient></defs><rect x="1.200" y=".8" width="22" height="22.300" rx="2" fill="url(#vg)" stroke="#7a9fcd" stroke-width="1"/><path d="M2.700 2.400l5.700 15.600 7.200-15.600h6.200" fill="none" stroke="#2f4a68" stroke-width="1.300"/><g fill="#fff" stroke="#5a7ba3" stroke-width=".7"><circle cx="2.900" cy="2.600" r="1.500"/><circle cx="15.600" cy="2.500" r="1.500"/><circle cx="21.600" cy="2.600" r="1.500"/><circle cx="8.400" cy="18" r="1.800"/></g><g opacity="1"><rect x="15.1" y="15" width="8.8" height="8.8" rx="1.600" fill="#c6a213"/><g stroke="#fff" stroke-width="1.150" stroke-linecap="round"><path d="M19.5 16.4v6M16.9 17.9l5.200 3M22.1 17.9l-5.200 3"/></g></g></svg></div>
<div class="hd" style="left:251px;top:10px"></div>
<div class="ic" style="left:264px;top:7px"><svg width="28" height="27" viewBox="0 0 28 27"><g opacity=".4"><g transform="translate(-2,-1)"><path d="M14 1.500l5 2-8.500 17-5.500 3.500 0.500-6.500z" fill="#d9d6cf" stroke="#a9a6a0" stroke-width=".9" stroke-linejoin="round"/><path d="M5.500 17.500l5 3-5 3.500z" fill="#777"/><path d="M14 1.500l5 2-1 2-5-2z" fill="#eee"/></g><g transform="translate(3,-1)"><path d="M14 1.500l5 2-8.500 17-5.500 3.500 0.500-6.500z" fill="#d9d6cf" stroke="#a9a6a0" stroke-width=".9" stroke-linejoin="round"/><path d="M5.500 17.500l5 3-5 3.500z" fill="#777"/><path d="M14 1.500l5 2-1 2-5-2z" fill="#eee"/></g></g><path d="M21 22.500l6 0-3 3z" fill="#bdbdbd"/></svg></div>
<div class="ic" style="left:296px;top:7px"><svg width="24" height="24" viewBox="0 0 24 24"><path d="M15.500 1l5.500 2.500-9 17.500-6.500 2.800.5-7z" fill="#e8cf1f" stroke="#7c6a0a" stroke-width=".9" stroke-linejoin="round"/><path d="M16.300 4.500l-8 15.300" stroke="#f8ee9a" stroke-width="1.500"/><path d="M18.800 5.700l-8 15.300" stroke="#a8940e" stroke-width="1.200"/><path d="M15.500 1l5.500 2.500-1.200 2.300-5.500-2.500z" fill="#ececec" stroke="#999" stroke-width=".7"/><path d="M6 16.800l6 4.200-6.500 2.800z" fill="#c4c4c4" stroke="#555" stroke-width=".6"/><path d="M5.700 20.600l3 2-3.200 1.200z" fill="#333"/></svg></div>
<div class="ic" style="left:329px;top:7px"><svg width="24" height="24" viewBox="0 0 24 24"><g transform="translate(1 0.5)"><g opacity="0.38"><rect x="2" y="1" width="19" height="20" rx="2" fill="#b9bcc0" stroke="#a0a3a8"/><rect x="5" y="2.500" width="13" height="8" fill="#f1f1f1"/><path d="M7 4.500h9M7 6.500h9M7 8.500h9" stroke="#999" stroke-width=".8"/><rect x="6" y="13.500" width="11" height="6.500" fill="#e6e6e6"/><rect x="7.500" y="15" width="2.500" height="4" fill="#999"/><path d="M21 10l3 1.500-6 10-4 2 .5-4z" fill="#d2cfc8" stroke="#999" stroke-width=".8"/></g></g></svg></div>
<div class="ic" style="left:362px;top:7px"><svg width="24" height="24" viewBox="0 0 24 24"><g transform="translate(1.3 0.5)"><g opacity="0.4"><path d="M3 8c-2-4 2-7 7-6.500 4 .5 6 2 9.500 1 3-1 4 3 1.500 6-2 2.500-6 1-9 2.500-4 2-7 1-9-3z" fill="#dfe3df" stroke="#8d918d" stroke-width="1"/><g opacity="1"><rect x="12.5" y="12.5" width="11" height="11" rx="2.2" fill="#a8a48f"/><g stroke="#fff" stroke-width="1.3" stroke-linecap="round"><path d="M18.0 14.0v8.0M14.6 16.0l6.8 4.0M21.4 16.0l-6.8 4.0"/></g><circle cx="18.0" cy="18.0" r="2.5" fill="#fff"/><circle cx="18.0" cy="18.0" r="1.0" fill="#a8a48f"/></g></g></g></svg></div>
<div class="ic" style="left:395px;top:7px"><svg width="24" height="24" viewBox="0 0 24 24"><g transform="translate(2 1)"><g opacity="0.4"><path d="M6.500 4.500h11M6 6l-3.500 15" stroke="#777" stroke-width="1"/><rect x="3.500" y="2.500" width="4.500" height="4.500" fill="#fff" stroke="#666" stroke-width=".9"/><path d="M4.500 3.500l2.500 2.500M7 3.500l-2.500 2.500" stroke="#666" stroke-width=".7"/><path d="M9 21l11-11.500" stroke="#9a968a" stroke-width="3"/><path d="M10.500 8.500l11 11" stroke="#9a968a" stroke-width="3.400"/><path d="M9 11.500l3.500-4.500 3 1.500-4 4.500z" fill="#b9b5a8"/></g></g></svg></div>
<div class="dd dis" style="left:426px;top:17px"></div>
<div class="ic" style="left:440px;top:7px"><svg width="24" height="24" viewBox="0 0 24 24"><g transform="translate(2 0.5)"><g opacity="0.4"><rect x="1.500" y="2.500" width="19" height="5" fill="#d6d3c4" stroke="#b9b6a6" stroke-width=".8"/><rect x="1.500" y="9.500" width="19" height="5" fill="#d6d3c4" stroke="#b9b6a6" stroke-width=".8"/><rect x="1.500" y="16.500" width="19" height="5" fill="#d6d3c4" stroke="#b9b6a6" stroke-width=".8"/><path d="M17.500 1l3.500 1.800-9.500 17-4.500 3 .5-5z" fill="#e9e7e1" stroke="#8f8c84" stroke-width=".9"/></g></g></svg></div>
<div class="ic" style="left:473px;top:7px"><svg width="24" height="24" viewBox="0 0 24 24"><g transform="translate(0.5 0.5)"><g opacity="0.4"><rect x="2.500" y="2.500" width="13" height="14" fill="#eee" stroke="#a59a9a" stroke-width=".9"/><path d="M5 6.500h17" stroke="#9a8585" stroke-width="1.800"/><path d="M6.500 8.500h14l-1.200 13.500h-11.600z" fill="#d9cccc" stroke="#a18c8c" stroke-width="1.100"/><path d="M10 10.500v9.500M13.500 10.500v9.500M17 10.500v9.500" stroke="#a18c8c" stroke-width="1.200"/></g></g></svg></div>
<div class="ic" style="left:506px;top:7px"><svg width="24" height="24" viewBox="0 0 24 24"><g transform="translate(1.5 1) translate(12 12) scale(0.9) translate(-12 -12)"><g opacity="0.4"><path d="M1.500 5l15.500 8M1.500 13.500l15.500-6.500" stroke="#9a9a9a" stroke-width="1.700" stroke-linecap="round"/><ellipse cx="19.500" cy="7" rx="2.800" ry="2.300" fill="none" stroke="#b99" stroke-width="1.400" transform="rotate(-25 19.500 7)"/><ellipse cx="19" cy="15.500" rx="2.300" ry="3" fill="none" stroke="#b99" stroke-width="1.400" transform="rotate(-20 19 15.500)"/></g></g></svg></div>
<div class="ic" style="left:539px;top:7px"><svg width="24" height="24" viewBox="0 0 24 24"><g transform="translate(1.5 1) translate(12 12) scale(0.9) translate(-12 -12)"><g opacity="0.4"><path d="M8.500 1.500h8l4 4v13.500h-12z" fill="#f4f4f4" stroke="#999" stroke-width=".9"/><path d="M3.500 5.500h8l4 4v13h-12z" fill="#fafafa" stroke="#999" stroke-width=".9"/><path d="M11.500 5.500v4h4" fill="none" stroke="#999" stroke-width=".9"/><path d="M5.500 12.500h8M5.500 14.500h8M5.500 16.500h8M5.500 18.500h8M5.500 20.500h6" stroke="#aaa" stroke-width=".8"/></g></g></svg></div>
<div class="ic" style="left:572px;top:7px"><svg width="24" height="24" viewBox="0 0 24 24"><g transform="translate(1.5 1) translate(12 12) scale(0.9) translate(-12 -12)"><g opacity="0.4"><rect x="3.500" y="2.500" width="16" height="20" rx="1" fill="#d9d6cf" stroke="#9a968c" stroke-width="1"/><rect x="7.500" y="1" width="8" height="4" rx="1" fill="#c5c2ba" stroke="#9a968c" stroke-width=".8"/><path d="M6.500 6.500h7l3.500 3.500v11h-10.500z" fill="#fafafa" stroke="#999" stroke-width=".8"/><path d="M8.500 12.500h6.500M8.500 14.500h6.500M8.500 16.500h6.500M8.500 18.500h5" stroke="#aaa" stroke-width=".8"/></g></g></svg></div>
<div class="ic" style="left:605px;top:7px"><svg width="24" height="24" viewBox="0 0 24 24"><g transform="translate(1.5 1) translate(12 12) scale(0.9) translate(-12 -12)"><g opacity="0.4"><path d="M1.500 9.500l8-7v4.500h5c4 0 6.500 3 6.500 6.500s-2.500 6.500-6 6.500h-4v-4.500h3c1.500 0 2.500-1 2.500-2.300s-1-2.200-2.500-2.200h-4.500v4.500z" fill="#c8beb4" stroke="#b5aaa0" stroke-width=".6"/></g></g></svg></div>
<div class="ic" style="left:638px;top:7px"><svg width="24" height="24" viewBox="0 0 24 24"><g transform="translate(1.5 1) translate(12 12) scale(0.9) translate(-12 -12)"><g opacity="0.4"><path d="M22.500 9.500l-8-7v4.500h-5c-4 0-6.500 3-6.500 6.500s2.500 6.500 6 6.500h4v-4.500h-3c-1.500 0-2.500-1-2.500-2.300s1-2.200 2.500-2.200h4.500v4.500z" fill="#b9bdb9" stroke="#a8aca8" stroke-width=".6"/></g></g></svg></div>
<div class="hd" style="left:675px;top:10px"></div>
<div class="ic" style="left:687px;top:7px"><svg width="24" height="24" viewBox="0 0 24 24"><g opacity="1"><path d="M6.500 4.400h15.300v10.200h-15.300l-5.200-5.100z" fill="#f8e03a" stroke="#c9a70c" stroke-width="1.1" stroke-linejoin="round"/><text x="5.900" y="12.300" font-family="Liberation Sans,sans-serif" font-weight="bold" font-size="8" fill="#333">abc</text></g></svg></div>
<div class="ic" style="left:720px;top:7px"><svg width="24" height="24" viewBox="0 0 24 24"><circle cx="10" cy="9" r="7" fill="#f2d21b" stroke="#8a7a1a" stroke-width=".5"/><path d="M10 9L3.940 5.500A7 7 0 0 1 16.060 5.500Z" fill="#f5c211"/><path d="M10 9L16.060 5.500A7 7 0 0 1 10 16Z" fill="#c01c28"/><path d="M10 9L10 16A7 7 0 0 1 3.940 5.500Z" fill="#1fa045"/><path d="M10 9L3.940 5.500M10 9L16.060 5.500M10 9V16" stroke="#6a5a10" stroke-width=".5"/><rect x="11.500" y="16.500" width="3" height="6" fill="#f5c211" stroke="#c9a010" stroke-width=".6"/><rect x="15.600" y="10.500" width="3.300" height="12" fill="#1fa045" stroke="#146c2a" stroke-width=".6"/><rect x="19.900" y="17" width="2.900" height="5.500" fill="#c01c28" stroke="#8c0d15" stroke-width=".6"/></svg></div>
<div class="sep" style="left:753px;top:10px;height:19px"></div>
<div class="ic" style="left:760px;top:7px"><svg width="24" height="24" viewBox="0 0 24 24"><defs><linearGradient id="lpg" x1="0" y1="0" x2="0" y2="1"><stop offset="0" stop-color="#e6f0fb"/><stop offset="1" stop-color="#b3cfee"/></linearGradient></defs><g opacity="1"><path d="M6.500 4.400h15.300v10.200h-15.300l-5.200-5.100z" fill="url(#lpg)" stroke="#4a90e2" stroke-width="1.1" stroke-linejoin="round"/><text x="5.900" y="12.300" font-family="Liberation Sans,sans-serif" font-weight="bold" font-size="8" fill="#222">ab</text></g><path d="M18.300 8.700l1 5.500" stroke="#777" stroke-width="2.400" stroke-linecap="round"/><path d="M18.300 8.700l1 5.500" stroke="#f4f4f4" stroke-width="1.400" stroke-linecap="round"/><circle cx="19.700" cy="18" r="4.600" fill="#9c1c1c"/><circle cx="18.300" cy="16.500" r="1.500" fill="#c85a5a" opacity=".7"/></svg></div>
<div class="ic" style="left:793px;top:7px"><svg width="24" height="24" viewBox="0 0 24 24"><g opacity="1"><path d="M6.500 4.400h15.300v10.200h-15.300l-5.200-5.100z" fill="#fff4f4" stroke="#ee1c1c" stroke-width="1.4" stroke-linejoin="round"/><text x="5.900" y="12.300" font-family="Liberation Sans,sans-serif" font-weight="bold" font-size="8" fill="#ee1c1c">abc</text></g></svg></div>
<div class="sep" style="left:826px;top:10px;height:19px"></div>
<div class="ic" style="left:834px;top:7px"><svg width="24" height="24" viewBox="0 0 24 24"><g opacity="0.45" transform="translate(-.8 0)"><g opacity="1"><path d="M6.500 4.400h15.300v10.200h-15.300l-5.200-5.100z" fill="#e6e4da" stroke="#aaa798" stroke-width="1.1" stroke-linejoin="round"/><text x="5.900" y="12.300" font-family="Liberation Sans,sans-serif" font-weight="bold" font-size="8" fill="#777">ab</text></g><path d="M19 8.700l1 5.500" stroke="#888" stroke-width="2.400" stroke-linecap="round"/><path d="M19 8.700l1 5.500" stroke="#f4f4f4" stroke-width="1.400" stroke-linecap="round"/><circle cx="20.500" cy="18" r="4.600" fill="#9d8f8f"/></g></svg></div>
<div class="ic" style="left:867px;top:7px"><svg width="24" height="24" viewBox="0 0 24 24"><g opacity="0.45" transform="translate(-.8 0)"><g opacity="1"><path d="M6.500 4.400h15.300v10.200h-15.300l-5.200-5.100z" fill="#e6e4da" stroke="#aaa798" stroke-width="1.1" stroke-linejoin="round"/><text x="5.900" y="12.300" font-family="Liberation Sans,sans-serif" font-weight="bold" font-size="8" fill="#777">abc</text></g><path d="M8 18.500q6.500-6 13.500 0q-7 6-13.500 0z" fill="#fff" stroke="#888" stroke-width=".9"/><circle cx="14.500" cy="18.300" r="2.600" fill="#888"/><path d="M9 15.500q6-4.500 13 1" fill="none" stroke="#888" stroke-width=".8"/></g></svg></div>
<div class="ic" style="left:900px;top:7px"><svg width="24" height="24" viewBox="0 0 24 24"><g opacity="0.45" transform="translate(-.8 0)"><g opacity="1"><path d="M6.500 4.400h15.300v10.200h-15.300l-5.200-5.100z" fill="#e6e4da" stroke="#aaa798" stroke-width="1.1" stroke-linejoin="round"/><text x="5.900" y="12.300" font-family="Liberation Sans,sans-serif" font-weight="bold" font-size="8" fill="#777">abc</text></g><rect x="13" y="13" width="10.500" height="10.500" rx="2" fill="#9fa4a8"/><path d="M14.500 18.200h4v-2.700l4 3.700-4 3.700v-2.700h-4z" fill="#fff"/></g></svg></div>
<div class="ic" style="left:933px;top:7px"><svg width="24" height="24" viewBox="0 0 24 24"><g opacity="0.45" transform="translate(-.8 0)"><g opacity="1"><path d="M6.500 4.400h15.300v10.200h-15.300l-5.200-5.100z" fill="#e6e4da" stroke="#aaa798" stroke-width="1.1" stroke-linejoin="round"/><text x="5.900" y="12.300" font-family="Liberation Sans,sans-serif" font-weight="bold" font-size="8" fill="#777">abc</text></g><rect x="13" y="13" width="10.500" height="10.500" rx="2" fill="#9fa4a8"/><path d="M15.500 19a3 3 0 1 1 2.500 2.800" fill="none" stroke="#fff" stroke-width="1.700"/><path d="M13.800 17.200l3.400.3-1.700 2.900z" fill="#fff"/></g></svg></div>
<div class="ic" style="left:966px;top:7px"><svg width="24" height="24" viewBox="0 0 24 24"><g opacity="0.45" transform="translate(-.8 0)"><g opacity="1"><path d="M6.500 4.400h15.300v10.200h-15.300l-5.200-5.100z" fill="#e6e4da" stroke="#aaa798" stroke-width="1.1" stroke-linejoin="round"/><text x="5.900" y="12.300" font-family="Liberation Sans,sans-serif" font-weight="bold" font-size="8" fill="#777">abc</text></g><rect x="13" y="13" width="10.500" height="10.500" rx="2" fill="#b5b19f"/><path d="M21.500 14.500l1 1-6 6-2 .8.900-1.900z" fill="#fff" stroke="#fff" stroke-width="1.200"/></g></svg></div>
<div class="hd" style="left:1002px;top:10px"></div>
<div class="ic" style="left:1015px;top:7px"><svg width="25" height="24" viewBox="0 0 25 24"><defs><radialGradient id="msg" cx=".4" cy=".3" r=".8"><stop offset="0" stop-color="#a9c6e8"/><stop offset="1" stop-color="#4a74a8"/></radialGradient></defs><circle cx="12.200" cy="11.700" r="11.500" fill="url(#msg)" stroke="#28456e" stroke-width=".9"/><g stroke="#e6eef8" stroke-width=".8" fill="none"><ellipse cx="12.200" cy="11.700" rx="5" ry="11.500"/><path d="M12.200 .3v22M1.800 7h21M.8 11.700h23M1.800 16.500h21"/></g><path d="M4.500 4.500h5.500v2h-5.500zM14.500 4.500h5.500v2h-5.500zM3 8.500h3.500v2.500h-3.500zM8 8h3.500v3h-3.500zM13.500 8h3.500v3h-3.500zM18.500 8.500h3.500v2.500h-3.500zM4 13h3v3h-3z" fill="#1d3557" opacity=".8"/><g fill="#000"><path d="M9.500 12.600h3.600l.4 4h-1.200l.4 3h-7.200z"/><path d="M19 12.600h-3.600l-.4 4h1.200l-.4 3h7.200z"/><ellipse cx="9" cy="20.500" rx="4.700" ry="3.200"/><ellipse cx="19.500" cy="20.500" rx="4.700" ry="3.200"/></g><ellipse cx="9" cy="21" rx="2.900" ry="1.500" fill="#fff"/><ellipse cx="19.500" cy="21" rx="2.900" ry="1.500" fill="#fff"/></svg></div>
<div class="hd" style="left:1051px;top:10px"></div>
<div class="ic" style="left:1064px;top:7px"><svg width="24" height="24" viewBox="0 0 24 24"><g transform="translate(.6 .8)"><path d="M10.500 1.500c-4 0-4.500 1.800-4.500 3.500v2.500h5v1h-7c-2 0-3 1.800-3 4.500s1 4.500 3 4.500h2v-3c0-2 1.500-3.300 3.500-3.300h4.500c1.500 0 2.500-1 2.500-2.700v-3.500c0-1.700-1.500-3.500-6-3.500z" fill="#3c78aa"/><circle cx="8.200" cy="4.200" r="1" fill="#fff"/><path d="M12.500 21.500c4 0 4.500-1.800 4.500-3.500v-2.500h-5v-1h7c2 0 3-1.800 3-4.500s-1-4.500-3-4.500h-2v3c0 2-1.500 3.300-3.500 3.300h-4.500c-1.500 0-2.500 1-2.500 2.700v3.500c0 1.700 1.500 3.500 6 3.500z" fill="#f6cf3c"/><circle cx="14.800" cy="18.800" r="1" fill="#fff"/><path d="M16 17.500l6 3-6 3" fill="none" stroke="#333" stroke-width="1.200"/></g></svg></div>
<div class="hd" style="left:1100px;top:10px"></div>
<div class="ic" style="left:1112px;top:7px"><svg width="24" height="24" viewBox="0 0 24 24"><g transform="translate(.8 0)"><rect x="2.500" y="1.500" width="19" height="20.500" rx="1" fill="#5e8cc4" stroke="#1f2d3d" stroke-width="1.100"/><rect x="2.500" y="1.500" width="4.500" height="20.500" fill="#2b3f56" stroke="#1f2d3d" stroke-width="1.100"/><text x="10" y="17.500" font-family="Liberation Serif,serif" font-size="16" fill="#fff">?</text></g></svg></div>
<div class="hd" style="left:1149px;top:10px"></div>
</div>
<div id="left" class="abs">
<div class="ptitle" style="top:1.5px">ブラウザ</div>
<div class="abs" style="left:267px;top:3px"><svg width="11" height="11" viewBox="0 0 11 11"><rect x=".5" y=".5" width="10" height="10" rx="2" fill="#fff" stroke="#6a6a6a" stroke-width="1"/><rect x="4.500" y="2.500" width="4" height="4" rx=".8" fill="none" stroke="#555" stroke-width="1"/><rect x="2.500" y="4.500" width="4" height="4" rx=".8" fill="#fff" stroke="#555" stroke-width="1"/></svg></div>
<div class="abs" style="left:281px;top:3px"><svg width="11" height="11" viewBox="0 0 11 11"><rect x=".5" y=".5" width="10" height="10" rx="2" fill="#fff" stroke="#6a6a6a" stroke-width="1"/><path d="M3 3l5 5M8 3l-5 5" stroke="#555" stroke-width="1.800" stroke-linecap="round"/></svg></div>
<div class="abs" style="left:8px;top:25px"><svg width="16" height="16" viewBox="0 0 16 16"><rect x="1.500" y="1.500" width="11" height="11" fill="#f0f0ee" stroke="#7d7d7d" stroke-width="1"/><rect x="9.800" y="9.800" width="5.700" height="5.700" rx="1.500" fill="#5b9a5b"/><circle cx="12.650" cy="12.650" r="1.600" fill="#b9dcb9"/></svg></div>
<div class="abs" style="left:33px;top:25px"><svg width="16" height="16" viewBox="0 0 16 16"><defs><linearGradient id="brg" x1="0" y1="0" x2="0" y2="1"><stop offset="0" stop-color="#7eb2e6"/><stop offset="1" stop-color="#3c78c0"/></linearGradient></defs><g transform="translate(8 8) scale(.73) translate(-12 -12)"><path d="M2 11.500c0-5.500 4.500-9 9.500-9 3 0 5 1 6.700 2.600l2.800-2.800v8.700h-8.700l3-3c-1-1-2.200-1.600-3.800-1.600-2.800 0-5 2.300-5 5.100z" fill="url(#brg)"/><path d="M22 12.500c0 5.500-4.500 9-9.500 9-3 0-5-1-6.700-2.600l-2.800 2.800v-8.700h8.700l-3 3c1 1 2.200 1.600 3.800 1.600 2.800 0 5-2.300 5-5.100z" fill="url(#brg)"/></g></svg></div>
<div class="abs" style="left:58px;top:25px"><svg width="16" height="16" viewBox="0 0 16 16"><path d="M1.500 1.500h13v1.500l-5 5.500v7l-3-1.800v-5.200l-5-5.500z" fill="#6b97cb" stroke="#4a7ab5" stroke-width=".8" stroke-linejoin="round"/><path d="M2.300 2.600h11.400" stroke="#f2dc3a" stroke-width="1.500"/></svg></div>
<div class="abs" style="left:84px;top:25px"><svg width="16" height="16" viewBox="0 0 16 16"><path d="M2.500 1.500v13M2.500 1.500h4" stroke="#888" stroke-width="1" fill="none"/><rect x="3.500" y="5" width="3" height="3" fill="#fff" stroke="#f08a00" stroke-width="1"/><rect x="3.500" y="10.500" width="3" height="3" fill="#fff" stroke="#f08a00" stroke-width="1"/><path d="M11 .8l4.500 5.200h-2.700v8.500h-3.600v-8.500h-2.700z" fill="#4f7fb8" stroke="#2c4f7c" stroke-width=".8" stroke-linejoin="round"/></svg></div>
<div class="abs" style="left:108px;top:25px"><svg width="16" height="16" viewBox="0 0 16 16"><circle cx="8" cy="8" r="7" fill="#5e8cc4" stroke="#8fb0d8" stroke-width=".8"/><text x="5.800" y="12" font-family="Liberation Serif,serif" font-style="italic" font-weight="bold" font-size="11.500" fill="#fff">i</text></svg></div>
<div class="tree" style="top:49px;height:220px"><div class="abs" style="left:-1px;top:0;width:0;height:0">
<div class="abs" style="left:20px;top:3.5px"><svg width="16" height="16" viewBox="0 0 16 16"><path d="M8 .8l2.200 4.900 5.300.6-4 3.600 1.100 5.300-4.600-2.700-4.600 2.700 1.100-5.300-4-3.600 5.300-.6z" fill="#fdf27a" stroke="#e0b000" stroke-width="1" stroke-linejoin="round"/></svg></div>
<div class="row" style="top:3.5px;font-size:13px">お気に入り</div>
<div class="abs" style="left:20px;top:25px"><svg width="16" height="16" viewBox="0 0 16 16"><path d="M2.500 1.500h11.500v13h-9.500a2 2 0 0 1-2-2z" fill="#e9e9e9" stroke="#a8a8a8" stroke-width=".9"/><path d="M2.500 1.500a1.200 1.200 0 0 1 2 .7v10.800a2 2 0 0 0-2 0z" fill="#d4d4d4" stroke="#a8a8a8" stroke-width=".8"/><path d="M9 1.500h3v5.500l-1.500 1.500-1.500-1.500z" fill="#6796cf" stroke="#4a78b0" stroke-width=".7"/></svg></div>
<div class="row" style="top:25px;font-size:13px">空間ブックマーク</div>
<div class="exp" style="top:29px"></div>
<div class="abs" style="left:20px;top:47px"><svg width="16" height="16" viewBox="0 0 16 16"><path d="M1.500 14.500v-11.500q0-1 1-1h3.500l1 1.500h6.500q1 0 1 1v10z" fill="#fafafa" stroke="#8a8a8a" stroke-width=".9"/><path d="M4.500 9.500l3.500-3.300 3.500 3.300M5.500 9v3.500h5v-3.500" fill="none" stroke="#222" stroke-width="1"/><rect x="7.300" y="10" width="1.400" height="2.500" fill="#222"/></svg></div>
<div class="row" style="top:47px;font-size:13px">ホーム</div>
<div class="exp" style="top:51px"></div>
<div class="abs" style="left:20px;top:67.5px"><svg width="16" height="16" viewBox="0 0 16 16"><path d="M2.500 14.500v-11.500q0-1 1-1h3l1 1.500h5.500q1 0 1 1v10z" fill="#f1f1f1" stroke="#9a9a9a" stroke-width=".9"/></svg></div>
<div class="row" style="top:66.5px">/</div>
<div class="exp" style="top:71.5px"></div>
<div class="abs" style="left:20px;top:86.5px"><svg width="16" height="16" viewBox="0 0 16 16"><g transform="scale(.667)"><g stroke="#5a4a00" stroke-width="1.200" stroke-linejoin="round"><path d="M.5 8.400l11-4 12 3.500-10.500 7.600z" fill="#e8c020"/><path d="M.5 8.400l12.500 7.100v8l-12.500-7z" fill="#d4a800"/><path d="M13 15.500l10.500-7.600v7.600l-10.500 8z" fill="#fcf07a"/></g><circle cx="12.300" cy="7.200" r="6.400" fill="#6d9bd4" stroke="#3d69a3" stroke-width=".9"/><path d="M8 5c1.500-2 3.500-1.500 4.500-.5s-1 2.500-2 3.500-2 2-3 .5 0-2.500.5-3.500zM13.500 2.500c2 0 3.500 1.500 4 3l-1.500 2.500-2-1.500zM12 9c1.500 0 3 .5 3.500 2l-1.500 2-2.500-1z" fill="#e6eef8"/><path d="M.5 8.400l12.500 7.100 10.500-7.600" fill="none" stroke="#5a4a00" stroke-width="1.200"/></g></svg></div>
<div class="row" style="top:85.5px">GeoPackage</div>
<div class="abs" style="left:20px;top:105.5px"><svg width="16" height="16" viewBox="0 0 16 16"><path d="M1 15.500c.7-4.700 2.700-8.700 6-11.300 2.300-2 5.300-3 8-3.700-.3 2.700-1.700 5.300-4 7.300-2.700 2.300-6 3.300-9 5.300z" fill="#7ea3cf" stroke="#2f4f7a" stroke-width=".8"/><path d="M1 15.500c2-4.700 6-9.300 12.700-14" fill="none" stroke="#2f4f7a" stroke-width=".8"/></svg></div>
<div class="row" style="top:104.5px">SpatiaLite</div>
<div class="abs" style="left:20px;top:124.5px"><svg width="16" height="16" viewBox="0 0 16 16"><path d="M4.500 1c-2.500 0-4 1.800-3.700 4.500.3 2.800 1.500 5.500 3 5.500.6 0 1-.4 1.400-1 .2 1.500.5 3 1 4 .6 1.300 2.800 1.300 3.100-.2l.4-2.800c1 .6 3 .4 3.800-.6-1.200.2-2-.2-2-.8 2.300-1.200 4-4.200 3.500-6.600-.4-2-2.300-2.600-4-2-1.500-.8-4.500-.8-6.500 0z" fill="#4d7fbd" stroke="#264a78" stroke-width=".9" stroke-linejoin="round"/><path d="M5.200 10c-.6-2-.3-4.500.3-6M8.800 2.500c1.200 1.500 1.400 4.300.7 6.700M6.500 6.500v5" fill="none" stroke="#dfe9f5" stroke-width=".8"/><circle cx="10.800" cy="4.300" r=".7" fill="#fff"/></svg></div>
<div class="row" style="top:123.5px">PostgreSQL</div>
<div class="abs" style="left:20px;top:143.5px"><svg width="16" height="16" viewBox="0 0 16 16"><path d="M.5 .8c5.500-.3 11.500 2.200 15.300 6.700-3.200.3-6.500 1.300-8.800 2.500-2.800 1.500-5 3.200-6.500 5.700 2.200-4.700 2.200-10.200 0-14.900z" fill="#4d7fbd" stroke="#264a78" stroke-width=".7" stroke-linejoin="round"/><path d="M3.800 1.500c1.700 3.600 1.700 8 0 11.700M7.500 2.800c1.200 2.600 1.200 5.400 0 7.800M11.200 4.800c.6 1.400.6 2.900 0 4.200" fill="none" stroke="#dfe9f5" stroke-width=".9"/></svg></div>
<div class="row" style="top:142.5px">MS SQL Server</div>
<div class="abs" style="left:20px;top:162.5px"><svg width="16" height="16" viewBox="0 0 16 16"><circle cx="8" cy="8" r="7" fill="#6d9bd4" stroke="#3d69a3" stroke-width="1"/><path d="M3.500 5c1-1.500 3-2 4-1s-.5 2.500-1.500 3.500-1.500 2.500-2.500 1.500-.5-3 0-4zM9.500 3c1.500 0 3 1 3.500 2.500s0 3-1 3.500-1.500-1-2-2.500-.5-3.500-.5-3.500zM6.500 10c1-.5 2.500 0 2.500 1.500s-1 2.500-2 2-1-3-.5-3.500z" fill="#e9f0f9"/><ellipse cx="8" cy="8" rx="3" ry="7" fill="none" stroke="#3d69a3" stroke-width=".5" opacity=".6"/><path d="M1 8h14" stroke="#3d69a3" stroke-width=".5" opacity=".6"/></svg></div>
<div class="row" style="top:161.5px">WMS/WMTS</div>
<div class="abs" style="left:20px;top:181.5px"><svg width="16" height="16" viewBox="0 0 16 16"><rect x="1" y="1" width="14" height="14" rx="1" fill="#2f4a68"/><g fill="#e9eef4"><rect x="2.500" y="2.500" width="3" height="3"/><rect x="6.500" y="2.500" width="3" height="3"/><rect x="10.500" y="2.500" width="3" height="3"/><rect x="2.500" y="6.500" width="3" height="3"/><rect x="6.500" y="6.500" width="3" height="3"/><rect x="10.500" y="6.500" width="3" height="3"/><rect x="2.500" y="10.500" width="3" height="3"/><rect x="6.500" y="10.500" width="3" height="3"/><rect x="10.500" y="10.500" width="3" height="3"/></g></svg></div>
<div class="row" style="top:180.5px">Vector Tiles</div>
<div class="abs" style="left:20px;top:200.5px"><svg width="16" height="16" viewBox="0 0 16 16"><g fill="#6b97cb"><rect x="1" y="1" width="4" height="4"/><rect x="6" y="1" width="4" height="4"/><rect x="11" y="1" width="4" height="4"/><rect x="1" y="6" width="4" height="4"/><rect x="6" y="6" width="4" height="4"/><rect x="11" y="6" width="4" height="4"/><rect x="1" y="11" width="4" height="4"/><rect x="6" y="11" width="4" height="4"/><rect x="11" y="11" width="4" height="4"/></g></svg></div>
<div class="row" style="top:199.5px">XYZ Tiles</div>
<div class="exp" style="top:204.5px"></div>
<div class="abs" style="left:279px;top:0;width:14px;height:218px;background:#fff;border-left:1px solid #c9c9c9"></div>
<div class="abs" style="left:280px;top:14px;width:13px;height:1px;background:#c9c9c9"></div>
<div class="abs" style="left:280px;top:153px;width:13px;height:51px;background:#ececec;border-top:1px solid #d6d6d6"></div>
<div class="abs" style="left:280px;top:204px;width:13px;height:1px;background:#c9c9c9"></div>
<div class="abs" style="left:283px;top:5px;width:0;height:0;border-left:4px solid transparent;border-right:4px solid transparent;border-bottom:4px solid #8a8a8a"></div>
<div class="abs" style="left:283px;top:210px;width:0;height:0;border-left:4px solid transparent;border-right:4px solid transparent;border-top:4px solid #8a8a8a"></div>
</div></div>
<div class="abs" style="left:140px;top:271px;width:16px;height:1px;background-image:linear-gradient(90deg,#bbb 1px,transparent 1px);background-size:3px 1px"></div>
<div class="abs" style="left:297px;top:271px;width:1px;height:16px;background-image:linear-gradient(#bbb 1px,transparent 1px);background-size:1px 3px"></div>
<div class="ptitle" style="top:277.5px">レイヤ</div>
<div class="abs" style="left:267px;top:279px"><svg width="11" height="11" viewBox="0 0 11 11"><rect x=".5" y=".5" width="10" height="10" rx="2" fill="#fff" stroke="#6a6a6a" stroke-width="1"/><rect x="4.500" y="2.500" width="4" height="4" rx=".8" fill="none" stroke="#555" stroke-width="1"/><rect x="2.500" y="4.500" width="4" height="4" rx=".8" fill="#fff" stroke="#555" stroke-width="1"/></svg></div>
<div class="abs" style="left:281px;top:279px"><svg width="11" height="11" viewBox="0 0 11 11"><rect x=".5" y=".5" width="10" height="10" rx="2" fill="#fff" stroke="#6a6a6a" stroke-width="1"/><path d="M3 3l5 5M8 3l-5 5" stroke="#555" stroke-width="1.800" stroke-linecap="round"/></svg></div>
<div class="abs" style="left:8px;top:301px"><svg width="16" height="16" viewBox="0 0 16 16"><path d="M1 9.500l5-6 5 5-4.500 6.500z" fill="#e23a3a"/><path d="M2 7.500l4-4.500 4 3.500-3.500 5z" fill="#f0d21f"/><path d="M3.500 5l2.500-2.500 3.500 3-2.500 3z" fill="#4d7fbd"/><path d="M7 8l3-2.500 2.500 3-2.500 4.500-4-2.500z" fill="#c49a4a" stroke="#8a6a28" stroke-width=".6"/><path d="M10.500 6.500l4.500-5" stroke="#c8862a" stroke-width="2" stroke-linecap="round"/></svg></div>
<div class="abs" style="left:33px;top:301px"><svg width="16" height="16" viewBox="0 0 16 16"><path d="M1.500 7v7.500h7.500" fill="none" stroke="#777" stroke-width="1"/><rect x="3.500" y="4.500" width="8" height="8" fill="#f2f2f2" stroke="#777" stroke-width="1"/><path d="M7.500 8.500v-6a1.800 1.800 0 0 1 3.600 0v6.500" fill="none" stroke="#4d7fbd" stroke-width="1.200"/><circle cx="12.500" cy="13" r="2.700" fill="#6fb36c" stroke="#4b8f4a" stroke-width=".8"/></svg></div>
<div class="abs" style="left:58px;top:301px"><svg width="19" height="17" viewBox="0 0 19 17"><path d="M1 8q7-8.500 15 0q-8 7-15 0z" fill="#f4f4f4" stroke="#9a9a9a" stroke-width="1"/><path d="M1.500 6q7-7 14 0" fill="none" stroke="#aaa" stroke-width=".8"/><circle cx="8" cy="7.500" r="3.300" fill="#5a8bc6" stroke="#3f6fa8" stroke-width=".6"/><circle cx="8" cy="7.500" r="1.400" fill="#1d3557"/><circle cx="7" cy="6.500" r=".7" fill="#fff"/><path d="M13 13h5l-2.500 2.800z" fill="#888"/></svg></div>
<div class="abs" style="left:83.5px;top:301px"><svg width="19" height="17" viewBox="0 0 19 17"><path d="M1.500 1.500h13v1.500l-5 5.500v7l-3-1.800v-5.200l-5-5.500z" fill="#6b97cb" stroke="#4a7ab5" stroke-width=".8" stroke-linejoin="round"/><path d="M2.300 2.600h11.400" stroke="#f2dc3a" stroke-width="1.500"/><path d="M13 13.500h5l-2.500 2.800z" fill="#888"/></svg></div>
<div class="abs" style="left:109px;top:301px"><svg width="16" height="16" viewBox="0 0 16 16"><text x=".3" y="10.700" font-family="Liberation Serif,serif" font-size="21" fill="#6a2a7a">ε</text><path d="M8 8.500h7.200l-2.500 3v4.200h-2.200v-4.200z" fill="#c4c4c4" stroke="#8a8a8a" stroke-width=".6"/></svg></div>
<div class="abs" style="left:145px;top:301px"><svg width="16" height="16" viewBox="0 0 16 16"><path d="M2.500 1.500v13M2.500 1.500h4" stroke="#888" stroke-width="1" fill="none"/><rect x="3.500" y="5" width="3" height="3" fill="#fff" stroke="#f08a00" stroke-width="1"/><rect x="3.500" y="10.500" width="3" height="3" fill="#fff" stroke="#f08a00" stroke-width="1"/><path d="M11 15.200l4.500-5.200h-2.700v-8.500h-3.600v8.500h-2.700z" fill="#4f7fb8" stroke="#2c4f7c" stroke-width=".8" stroke-linejoin="round"/></svg></div>
<div class="abs" style="left:170px;top:301px"><svg width="16" height="16" viewBox="0 0 16 16"><path d="M2.500 1.500v13M2.500 1.500h4" stroke="#888" stroke-width="1" fill="none"/><rect x="3.500" y="5" width="3" height="3" fill="#fff" stroke="#f08a00" stroke-width="1"/><rect x="3.500" y="10.500" width="3" height="3" fill="#fff" stroke="#f08a00" stroke-width="1"/><path d="M11 .8l4.500 5.200h-2.700v8.500h-3.600v-8.500h-2.700z" fill="#4f7fb8" stroke="#2c4f7c" stroke-width=".8" stroke-linejoin="round"/></svg></div>
<div class="abs" style="left:195px;top:301px"><svg width="16" height="16" viewBox="0 0 16 16"><rect x="1.500" y="1.500" width="11" height="11" fill="#f2f2f2" stroke="#7d7d7d" stroke-width="1"/><rect x="9" y="10.500" width="6.500" height="4.500" rx="1.500" fill="#e0243a"/><path d="M10.500 12.800h3.500" stroke="#fff" stroke-width="1.200"/></svg></div>
<div class="dd" style="left:130px;top:307px"></div>
<div class="tree" style="top:325px;height:232px"><div class="abs" style="left:-1px;top:0;width:0;height:0">
<div class="abs" style="left:0;top:0;width:293px;height:22px;background:#b3d0f5"></div>
<div class="abs" style="left:24px;top:4px;width:14px;height:14px;background:#fff;border:1px solid #c4c4c4"><svg width="12" height="12" viewBox="0 0 12 12" style="display:block"><path d="M2.300 6l2.700 3.200 4.500-7" fill="none" stroke="#111" stroke-width="1.700"/></svg></div>
<div class="abs" style="left:44px;top:3px;width:16px;height:16px;background:#d6b53e;border:1px solid #a88c2a"></div>
<div class="abs" style="left:66px;top:3.5px;font-size:13px;line-height:18px;font-weight:bold;text-underline-offset:2px;color:#fff;text-decoration:underline;white-space:nowrap">秋鹿郡</div>
</div></div>
</div>
<div id="canvas" class="abs"><svg class="mapsvg" width="1064" height="556" viewBox="0 0 1064 556">
<g fill="#d6b53e" stroke="#232323" stroke-width="1" stroke-linejoin="round">
<polygon points="40.2,232.4 66.3,233.7 82.5,230.7 84.2,232.4 91.2,225.7 86.7,230.7 93.7,229.2 112.3,231.7 116.0,230.2 142.2,231.7 150.9,229.2 165.8,220.0 174.5,218.2 213.0,222.0 220.5,220.7 226.8,222.5 235.5,225.0 255.4,223.7 259.0,223.2 282.6,212.0 298.8,205.0 305.0,201.3 305.8,197.6 308.3,202.6 310.5,198.8 316.2,190.1 326.2,188.1 331.1,185.6 333.6,188.4 361.0,198.8 372.2,196.8 388.4,196.8 398.3,196.8 405.8,191.9 413.2,185.6 413.7,190.1 406.3,193.4 430.6,198.8 445.6,205.8 446.8,206.8 456.8,203.8 458.0,197.1 475.4,198.3 479.1,196.8 487.9,198.8 500.2,188.3 507.7,190.6 520.1,187.1 528.8,185.1 533.8,180.1 537.5,185.1 574.8,202.5 602.2,207.0 607.2,203.8 634.5,200.0 648.2,191.3 659.4,175.1 663.2,168.8 662.7,158.2 659.3,156.2 656.4,158.2 655.4,155.3 648.2,153.5 641.9,150.6 639.3,147.0 645.0,150.6 652.7,153.1 658.8,155.2 656.9,150.9 655.4,146.1 654.8,136.4 646.4,136.4 646.1,133.7 654.0,133.3 654.5,128.7 644.8,129.4 637.1,137.9 632.7,136.4 637.5,128.5 621.0,121.1 607.7,141.4 620.3,114.4 612.6,105.2 626.3,103.4 626.3,90.6 617.5,81.3 625.4,61.0 619.7,57.0 619.2,51.5 623.6,51.1 618.8,43.3 614.8,42.7 618.1,40.4 619.2,32.7 623.2,30.9 624.7,33.8 628.1,27.9 633.6,28.7 636.5,26.1 642.4,32.3 661.2,37.6 663.0,50.8 671.1,48.2 691.0,49.7 691.7,44.9 692.6,46.4 699.2,41.6 685.5,30.1 687.3,24.3 676.7,19.5 683.3,16.1 697.0,21.7 703.6,12.8 708.3,13.9 712.3,23.4 714.9,22.8 712.7,26.1 718.4,27.2 718.9,20.6 722.2,19.5 727.7,27.2 745.8,36.0 748.0,27.2 748.0,11.1 758.2,17.7 756.9,27.2 763.0,28.3 766.4,32.3 767.5,38.9 773.0,46.0 775.9,45.5 776.7,39.8 782.9,37.1 778.5,33.8 781.8,32.7 796.2,38.9 805.4,39.3 805.4,41.5 798.8,41.5 798.8,57.7 812.1,57.7 818.3,51.0 817.2,42.0 820.0,41.1 820.9,43.8 823.8,43.3 825.3,39.3 828.9,43.8 828.2,53.7 842.6,74.7 844.8,79.5 840.3,89.0 830.4,100.1 831.5,103.4 831.1,116.6 824.9,129.9 822.2,137.6 824.4,145.3 821.6,154.2 822.2,159.7 831.5,155.3 835.9,151.3 841.4,153.1 836.6,163.9 831.6,168.3 833.8,173.0 853.7,179.9 857.9,185.4 863.4,197.9 864.2,207.6 864.0,231.0 859.3,233.8 862.0,236.6 854.3,239.9 860.6,242.6 862.0,247.6 866.2,257.3 867.6,264.2 873.6,278.6 878.1,276.1 886.9,298.2 893.8,295.4 909.5,329.6 902.2,333.2 911.4,348.5 912.8,354.1 932.3,393.0 935.1,401.4 939.2,411.1 940.1,418.0 942.8,450.9 946.2,451.4 948.4,455.6 946.7,458.4 907.2,462.0 893.3,460.3 880.8,452.0 873.9,455.0 855.8,445.3 794.6,452.0 779.8,454.8 778.2,445.3 749.2,448.1 655.5,420.8 637.4,413.9 629.6,418.0 597.9,416.7 587.0,420.5 535.8,444.0 518.2,455.5 506.1,448.5 484.6,448.5 456.3,450.1 417.2,463.6 397.0,466.9 357.9,483.6 348.5,491.4 328.1,507.3 310.5,503.6 286.2,509.4 267.9,513.3 240.6,531.6 214.7,540.7 205.6,530.0 135.7,527.6 135.7,527.0 139.7,524.0 140.3,498.1 143.9,476.9 141.8,446.5 146.4,431.3 146.4,419.1 139.7,399.3 140.3,384.2 143.9,376.6 143.3,369.0 136.6,362.9 135.7,356.8 140.3,353.8 135.7,346.2 133.5,344.0 131.0,330.7 128.5,313.3 129.7,305.8 128.5,293.4 131.0,283.4 136.5,271.5 133.5,267.2 132.2,262.3 111.0,256.5 91.2,256.5 61.3,257.3 44.0,251.0 39.0,244.8 37.7,237.4"/>
<polygon points="327.9,178.9 330.6,175.2 331.1,180.7"/>
<polygon points="573.3,34.5 580.6,39.3 576.1,37.1"/>
<polygon points="582.3,36.7 587.2,38.2 584.5,41.6"/>
<polygon points="597.1,36.0 604.2,41.1 599.3,40.4"/>
<polygon points="602.0,30.1 606.0,29.4 604.2,38.2"/>
<polygon points="609.3,46.0 617.7,52.6 612.6,55.2 607.1,50.4"/>
<polygon points="654.1,27.9 656.3,30.9 654.6,31.6"/>
<polygon points="716.2,15.2 720.2,14.4 719.4,16.4"/>
</g><g fill="none" stroke="#232323" stroke-width="1" stroke-linejoin="round">
<polyline points="226.8,222.5 225.5,233.7 223.0,242.4 226.8,249.8 233.0,266.0 240.4,277.2 246.7,283.4 249.6,294.6 247.9,300.3 243.4,302.8 242.4,313.3 237.5,316.2 240.4,320.7 240.4,328.2 245.4,338.1 246.7,343.1 246.0,350.7 240.6,358.3 246.7,373.5 250.3,387.2 249.7,393.3 257.3,397.8 258.2,403.9 253.7,411.5 258.8,422.1 264.3,429.7 267.9,440.4 277.1,447.1 272.5,455.6 267.9,464.7 269.5,476.9 277.1,487.5 276.4,492.1 286.2,509.4"/>
<polyline points="388.4,196.8 390.8,208.8 382.1,220.0 380.4,228.7 382.1,241.1 385.9,249.8 403.3,259.8 408.3,268.5 423.2,278.9 418.2,293.4 419.4,310.8 418.5,324.0 415.8,334.8 405.0,346.9 392.9,352.8 384.8,352.3 364.6,355.0 353.8,363.1 344.9,374.7 351.1,395.4 344.4,418.3 337.0,436.0 333.3,443.4 331.8,458.6 337.8,475.3 348.5,491.4"/>
<polyline points="520.1,187.1 526.3,207.5 532.5,218.7 545.0,221.2 577.3,232.4"/>
<polyline points="577.3,232.4 578.1,239.8 577.3,253.5 583.0,282.1 574.8,293.3 572.3,298.3 568.6,300.8 566.1,308.2 568.1,316.9 578.6,315.7 586.8,320.7 592.9,330.4 593.5,344.3 597.1,351.3 594.3,379.1 592.4,386.1 583.2,392.5 580.4,398.6 581.8,408.3 587.0,420.5"/>
<polyline points="577.3,232.4 594.7,229.9 604.7,221.7 609.6,222.4 612.1,225.6 620.8,226.1 624.6,228.6 642.7,218.7 659.4,222.4 673.1,231.1 674.3,238.1 671.3,239.1 681.0,240.6 691.0,239.1 680.5,227.4 702.9,213.7 717.8,208.9 732.2,213.9 750.1,228.8 764.8,226.9 795.7,245.7 806.8,247.3 818.4,244.0 840.5,249.0 853.2,261.2 867.6,264.2"/>
<polyline points="681.0,240.6 680.5,227.4 680.5,213.7 674.3,195.0 673.3,181.9 676.2,178.0 682.0,176.5 684.0,172.2 690.0,168.8 684.9,157.7 683.5,150.9 684.9,147.0 678.2,141.7 677.0,132.1 678.6,128.7 683.5,127.7 681.1,123.4 680.1,119.0 687.7,113.3 678.9,111.8 677.8,103.4 682.2,97.9 696.5,96.3 699.9,87.9 707.6,79.1 721.1,76.4 756.4,78.4 761.9,84.6 767.5,85.3 773.0,94.5 779.6,100.1 794.0,98.5 798.4,100.1 805.0,98.5 814.9,102.3 830.4,100.1"/>
</g></svg></div>
<div id="status" class="abs">
<div class="abs" style="left:4px;top:3.5px;width:200px;height:24px;background:#fff;border:1px solid #bcbcbc;border-radius:3px"></div>
<div class="abs" style="left:13px;top:10px"><svg width="12" height="12" viewBox="0 0 12 12"><circle cx="5" cy="5" r="3.800" fill="none" stroke="#8f8f8f" stroke-width="1.300"/><path d="M7.800 7.800l3.500 3.500" stroke="#8f8f8f" stroke-width="1.500" stroke-linecap="round"/></svg></div>
<div class="lb" style="left:33px;top:8px;color:#9a9a9a;font-size:12.500px">検索（Ctrl + K）</div>
<div class="lb" style="left:596px">座標</div>
<div class="fld" style="left:621px;width:114px;top:4px;padding-left:9px">35.4950,132.9206</div>
<div class="abs" style="left:738px;top:5.5px"><svg width="17" height="18" viewBox="0 0 17 18"><g transform="rotate(-25 8 9)"><rect x="4" y="3.500" width="9" height="13" rx="4.500" fill="#fff" stroke="#222" stroke-width="1.200"/><path d="M4.500 5.500l8 3M4 8l9 3.500M4.500 11l7.500 3" stroke="#222" stroke-width="1.300"/></g><path d="M12.500 4.500q2-1 3-3" fill="none" stroke="#222" stroke-width="1"/><circle cx="11.500" cy="13.500" r="2.300" fill="#fff" stroke="#222" stroke-width=".9"/><circle cx="11.500" cy="13.500" r=".8" fill="#222"/></svg></div>
<div class="lb" style="left:768px">縮尺</div>
<div class="fld" style="left:793px;width:93px;height:25px;top:3px;padding-left:3px;line-height:23px">1:42138<div class="abs" style="left:72px;top:0;width:1px;height:23px;background:#cfcfcf"></div><div class="dd" style="left:78px;top:10px"></div></div>
<div class="abs" style="left:898.5px;top:8px"><svg width="13" height="15" viewBox="0 0 13 15"><path d="M3 7v-2.500a3.500 3.500 0 0 1 7 0v2.500" fill="none" stroke="#8a8a8a" stroke-width="1.800"/><rect x=".5" y="6.500" width="12" height="8" rx="1.500" fill="#595959"/></svg></div>
<div class="lb" style="left:920px">拡大</div>
<div class="fld" style="left:945px;width:92px;height:24px;top:4px;line-height:22px">100%<div class="abs" style="left:76px;top:0;width:1px;height:22px;background:#cfcfcf"></div><div class="abs" style="left:80.5px;top:5px;width:0;height:0;border-left:3.500px solid transparent;border-right:3.500px solid transparent;border-bottom:4px solid #8a8a8a"></div><div class="abs" style="left:80.5px;top:14px;width:0;height:0;border-left:3.500px solid transparent;border-right:3.500px solid transparent;border-top:4px solid #8a8a8a"></div></div>
<div class="lb" style="left:1046px">回転</div>
<div class="fld" style="left:1077px;width:92px;height:24px;top:4px;line-height:22px">0.0 °<div class="abs" style="left:76px;top:0;width:1px;height:22px;background:#cfcfcf"></div><div class="abs" style="left:80.5px;top:5px;width:0;height:0;border-left:3.500px solid transparent;border-right:3.500px solid transparent;border-bottom:4px solid #8a8a8a"></div><div class="abs" style="left:80.5px;top:14px;width:0;height:0;border-left:3.500px solid transparent;border-right:3.500px solid transparent;border-top:4px solid #8a8a8a"></div></div>
<div class="abs" style="left:1175px;top:8px;width:14px;height:14px;background:#fff;border:1px solid #c4c4c4"><svg width="12" height="12" viewBox="0 0 12 12" style="display:block"><path d="M2.300 6l2.700 3.200 4.500-7" fill="none" stroke="#111" stroke-width="1.700"/></svg></div>
<div class="lb" style="left:1195px;font-size:11px">レンダ</div>
<div class="abs" style="left:1242px;top:8px"><svg width="16" height="16" viewBox="0 0 16 16"><g fill="none" stroke="#666" stroke-width=".9"><circle cx="8" cy="8" r="6.300"/><ellipse cx="8" cy="8" rx="2.800" ry="6.300"/><path d="M8 1.500v13M.5 8h15M2.500 4.800h11M2.500 11.200h11"/></g></svg></div>
<div class="lb" style="left:1260px;font-size:11px;top:7.500px">EPSG:4326</div>
<div class="abs" style="left:1343px;top:8.5px"><svg width="17" height="16" viewBox="0 0 17 16"><path d="M8.500 1c4.500 0 8 2.800 8 6.300s-3.300 6.200-7.500 6.300c1 1 2.300 1.600 3.500 1.900-2.500.3-5-.5-6.500-2.300-3-.8-5.500-3-5.500-5.900 0-3.500 3.500-6.300 8-6.300z" fill="#555"/><circle cx="5" cy="7.300" r="1.100" fill="#fff"/><circle cx="8.500" cy="7.300" r="1.100" fill="#fff"/><circle cx="12" cy="7.300" r="1.100" fill="#fff"/></svg></div>
</div>
</body></html>
